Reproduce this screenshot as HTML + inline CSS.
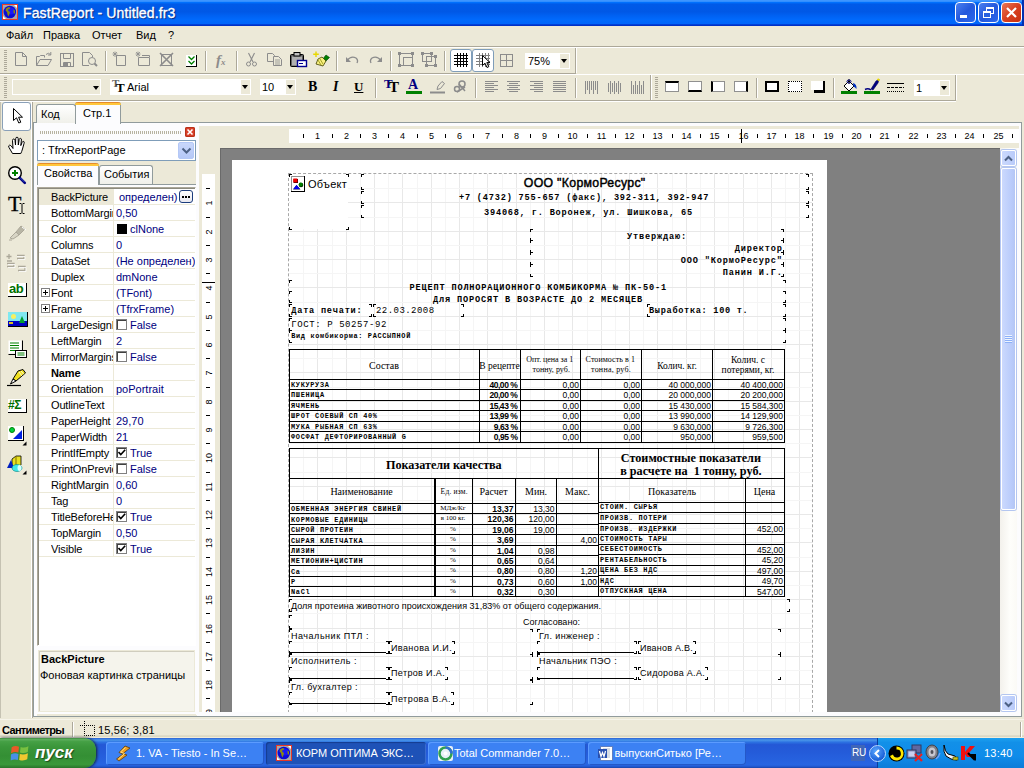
<!DOCTYPE html>
<html><head><meta charset="utf-8">
<title>FastReport - Untitled.fr3</title>
<style>
*{box-sizing:border-box;margin:0;padding:0}
html,body{width:1024px;height:768px;overflow:hidden;background:#ECE9D8;font-family:"Liberation Sans",sans-serif;font-size:11px;color:#000}
.a,.a *{position:absolute}
span{white-space:nowrap}
#title{left:0;top:0;width:1024px;height:26px;background:linear-gradient(180deg,#3D95FF 0%,#3D95FF 5%,#0072FF 9%,#005AE8 16%,#0058E6 45%,#0061F2 60%,#0069FC 75%,#0066FA 91%,#0038D0 95%,#002CC0 100%)}
#title .t{left:23px;top:5px;color:#fff;font-size:14px;letter-spacing:0.12px;-webkit-text-stroke:0.35px #fff;line-height:17px;text-shadow:1px 1px 1px #0A1F6E}
.wb{top:2px;width:21px;height:21px;border:1px solid #fff;border-radius:4px;background:linear-gradient(135deg,#4C80F0,#2458DC 50%,#2C68EC)}
#menu{left:0;top:26px;width:1024px;height:20px}
#menu span{top:3px;font-size:11px}
#task{left:0;top:738px;width:1024px;height:30px;background:linear-gradient(180deg,#2A5CD0 0%,#3D86E6 4%,#4590E8 8%,#2C72E2 14%,#2458D6 22%,#245CDA 50%,#2865E2 90%,#2258D0 95%,#1A44A8 100%)}
#start{left:0;top:738px;width:96px;height:30px;background:linear-gradient(180deg,#3E8A3E 0%,#5CAE5C 5%,#45A045 12%,#3A963A 30%,#348F34 60%,#3A983A 88%,#2A742A 100%);border-radius:0 12px 12px 0;box-shadow:1px 0 3px #123}
#start span{left:35px;top:5px;color:#fff;font-size:17px;font-weight:bold;font-style:italic;text-shadow:1px 1px 1px #1C4A1C}
.tb{top:742px;height:23px;border-radius:3px;background:#3C81F3;color:#fff;font-size:11px;box-shadow:inset 1px 1px 0 #5C9BFF, inset -1px -1px 0 #2458C8}

#tray{left:877px;top:738px;width:147px;height:30px;background:linear-gradient(180deg,#1CA0F0 0%,#1290E8 15%,#0F8CEA 60%,#0C7CD8 100%);border-left:1px solid #0A3C9C}
.pn{left:51px;color:#000}
.pv{left:116px;color:#000080}
.m{font-family:"Liberation Mono",monospace}
.s{font-family:"Liberation Serif",serif}
</style></head><body>
<div id="title" class="a"><span class="t">FastReport - Untitled.fr3</span><svg style="left:2px;top:4px" width="16" height="16" viewBox="0 0 16 16"><rect x="0.500" y="0.500" width="15" height="15" fill="#A8A8A8" stroke="#E83828"/><path d="M12 1L15 1L15 4Z M1 12L1 15L4 15Z" fill="#fff"/><circle cx="7.800" cy="8" r="6.300" fill="#0A0AD8"/><circle cx="9" cy="7" r="3.500" fill="#1818F8"/><path d="M4 4.500L6.500 3L8.500 3.500L7.500 5L6 5.500L6.500 7L8 8L7.500 10L6.500 12.500L5.500 10.500L5 8L3.500 6.500Z" fill="#8A8A10"/><path d="M11.500 5.500L13 6.500L13 9L12 10L11.500 8Z" fill="#8A8A10"/></svg><div class="wb" style="left:955px"><div style="left:4px;top:12px;width:7px;height:3px;background:#fff"></div></div><div class="wb" style="left:978px"><div style="left:7px;top:4px;width:8px;height:7px;border:1px solid #fff;border-top-width:2px"></div><div style="left:4px;top:8px;width:8px;height:7px;border:1px solid #fff;border-top-width:2px;background:#2860E0"></div></div><div class="wb" style="left:1001px;background:linear-gradient(135deg,#E87858,#D84020 50%,#C83010)"><svg style="left:3px;top:3px" width="13" height="13"><path d="M2 2L11 11M11 2L2 11" stroke="#fff" stroke-width="2.2"/></svg></div><div style="left:1022px;top:0;width:2px;height:26px;background:#0030B0"></div></div>
<div id="menu" class="a"><span style="left:6px">Файл</span><span style="left:43px">Правка</span><span style="left:92px">Отчет</span><span style="left:136px">Вид</span><span style="left:168px">?</span></div>
<div class="a" style="left:0px;top:46px;width:1024px;height:1px;background:#ACA899"></div>
<div class="a" style="left:0px;top:47px;width:1024px;height:1px;background:#fff"></div>
<div class="a" style="left:0px;top:73px;width:1024px;height:1px;background:#ACA899"></div>
<div class="a" style="left:0px;top:74px;width:1024px;height:1px;background:#fff"></div>
<div class="a" style="left:0px;top:100px;width:1024px;height:1px;background:#ACA899"></div>
<div class="a" style="left:0px;top:101px;width:1024px;height:1px;background:#fff"></div>
<div class="a" style="left:33px;top:122px;width:989px;height:595px;background:#FCFCFE;border:1px solid #919B9C"></div>
<div class="a" style="left:36px;top:104px;width:40px;height:19px;background:linear-gradient(#fff,#F0F0EA);border:1px solid #919B9C;border-bottom:none;border-radius:3px 3px 0 0"><span style="left:4px;top:3px">Код</span></div>
<div class="a" style="left:75px;top:102px;width:46px;height:22px;background:#FCFCFE;border:1px solid #919B9C;border-bottom:none;border-top:none;border-radius:3px 3px 0 0"><div style="left:-1px;top:0;width:46px;height:3px;border-radius:3px 3px 0 0;background:linear-gradient(#E68B2C 0,#E68B2C 34%,#FFC73C 34%)"></div><span style="left:7px;top:5px">Стр.1</span></div>
<div class="a" style="left:199px;top:126px;width:821px;height:589px;background:#ECE9D8"></div>
<div class="a" style="left:220px;top:148px;width:780px;height:564px;background:#808080"></div>
<div class="a" style="left:232px;top:160px;width:595px;height:552px;background:#fff"></div>
<div class="a" style="left:288px;top:173px;width:525px;height:540px;border:1px dashed #A8A8A8;border-bottom:none"></div>
<div class="a" style="left:0;top:0"><div style="left:303px;top:174px;width:1px;height:538px;background:#F5F5F5"></div><div style="left:317px;top:174px;width:1px;height:538px;background:#E8E8E8"></div><div style="left:332px;top:174px;width:1px;height:538px;background:#F5F5F5"></div><div style="left:346px;top:174px;width:1px;height:538px;background:#E8E8E8"></div><div style="left:360px;top:174px;width:1px;height:538px;background:#F5F5F5"></div><div style="left:374px;top:174px;width:1px;height:538px;background:#E8E8E8"></div><div style="left:388px;top:174px;width:1px;height:538px;background:#F5F5F5"></div><div style="left:402px;top:174px;width:1px;height:538px;background:#E8E8E8"></div><div style="left:417px;top:174px;width:1px;height:538px;background:#F5F5F5"></div><div style="left:431px;top:174px;width:1px;height:538px;background:#E8E8E8"></div><div style="left:445px;top:174px;width:1px;height:538px;background:#F5F5F5"></div><div style="left:459px;top:174px;width:1px;height:538px;background:#E8E8E8"></div><div style="left:473px;top:174px;width:1px;height:538px;background:#F5F5F5"></div><div style="left:487px;top:174px;width:1px;height:538px;background:#E8E8E8"></div><div style="left:502px;top:174px;width:1px;height:538px;background:#F5F5F5"></div><div style="left:516px;top:174px;width:1px;height:538px;background:#E8E8E8"></div><div style="left:530px;top:174px;width:1px;height:538px;background:#F5F5F5"></div><div style="left:544px;top:174px;width:1px;height:538px;background:#E8E8E8"></div><div style="left:558px;top:174px;width:1px;height:538px;background:#F5F5F5"></div><div style="left:572px;top:174px;width:1px;height:538px;background:#E8E8E8"></div><div style="left:587px;top:174px;width:1px;height:538px;background:#F5F5F5"></div><div style="left:601px;top:174px;width:1px;height:538px;background:#E8E8E8"></div><div style="left:615px;top:174px;width:1px;height:538px;background:#F5F5F5"></div><div style="left:629px;top:174px;width:1px;height:538px;background:#E8E8E8"></div><div style="left:643px;top:174px;width:1px;height:538px;background:#F5F5F5"></div><div style="left:657px;top:174px;width:1px;height:538px;background:#E8E8E8"></div><div style="left:672px;top:174px;width:1px;height:538px;background:#F5F5F5"></div><div style="left:686px;top:174px;width:1px;height:538px;background:#E8E8E8"></div><div style="left:700px;top:174px;width:1px;height:538px;background:#F5F5F5"></div><div style="left:714px;top:174px;width:1px;height:538px;background:#E8E8E8"></div><div style="left:728px;top:174px;width:1px;height:538px;background:#F5F5F5"></div><div style="left:743px;top:174px;width:1px;height:538px;background:#E8E8E8"></div><div style="left:757px;top:174px;width:1px;height:538px;background:#F5F5F5"></div><div style="left:771px;top:174px;width:1px;height:538px;background:#E8E8E8"></div><div style="left:785px;top:174px;width:1px;height:538px;background:#F5F5F5"></div><div style="left:799px;top:174px;width:1px;height:538px;background:#E8E8E8"></div><div style="left:289px;top:188px;width:523px;height:1px;background:#F5F5F5"></div><div style="left:289px;top:202px;width:523px;height:1px;background:#E8E8E8"></div><div style="left:289px;top:217px;width:523px;height:1px;background:#F5F5F5"></div><div style="left:289px;top:231px;width:523px;height:1px;background:#E8E8E8"></div><div style="left:289px;top:245px;width:523px;height:1px;background:#F5F5F5"></div><div style="left:289px;top:259px;width:523px;height:1px;background:#E8E8E8"></div><div style="left:289px;top:273px;width:523px;height:1px;background:#F5F5F5"></div><div style="left:289px;top:287px;width:523px;height:1px;background:#E8E8E8"></div><div style="left:289px;top:302px;width:523px;height:1px;background:#F5F5F5"></div><div style="left:289px;top:316px;width:523px;height:1px;background:#E8E8E8"></div><div style="left:289px;top:330px;width:523px;height:1px;background:#F5F5F5"></div><div style="left:289px;top:344px;width:523px;height:1px;background:#E8E8E8"></div><div style="left:289px;top:358px;width:523px;height:1px;background:#F5F5F5"></div><div style="left:289px;top:372px;width:523px;height:1px;background:#E8E8E8"></div><div style="left:289px;top:387px;width:523px;height:1px;background:#F5F5F5"></div><div style="left:289px;top:401px;width:523px;height:1px;background:#E8E8E8"></div><div style="left:289px;top:415px;width:523px;height:1px;background:#F5F5F5"></div><div style="left:289px;top:429px;width:523px;height:1px;background:#E8E8E8"></div><div style="left:289px;top:443px;width:523px;height:1px;background:#F5F5F5"></div><div style="left:289px;top:457px;width:523px;height:1px;background:#E8E8E8"></div><div style="left:289px;top:472px;width:523px;height:1px;background:#F5F5F5"></div><div style="left:289px;top:486px;width:523px;height:1px;background:#E8E8E8"></div><div style="left:289px;top:500px;width:523px;height:1px;background:#F5F5F5"></div><div style="left:289px;top:514px;width:523px;height:1px;background:#E8E8E8"></div><div style="left:289px;top:528px;width:523px;height:1px;background:#F5F5F5"></div><div style="left:289px;top:542px;width:523px;height:1px;background:#E8E8E8"></div><div style="left:289px;top:557px;width:523px;height:1px;background:#F5F5F5"></div><div style="left:289px;top:571px;width:523px;height:1px;background:#E8E8E8"></div><div style="left:289px;top:585px;width:523px;height:1px;background:#F5F5F5"></div><div style="left:289px;top:599px;width:523px;height:1px;background:#E8E8E8"></div><div style="left:289px;top:613px;width:523px;height:1px;background:#F5F5F5"></div><div style="left:289px;top:628px;width:523px;height:1px;background:#E8E8E8"></div><div style="left:289px;top:642px;width:523px;height:1px;background:#F5F5F5"></div><div style="left:289px;top:656px;width:523px;height:1px;background:#E8E8E8"></div><div style="left:289px;top:670px;width:523px;height:1px;background:#F5F5F5"></div><div style="left:289px;top:684px;width:523px;height:1px;background:#E8E8E8"></div><div style="left:289px;top:698px;width:523px;height:1px;background:#F5F5F5"></div></div>
<div class="a" style="left:290px;top:175px;width:58px;height:54px;background:#fff"></div>
<div class="a" style="left:289px;top:174px;width:3px;height:1px;background:#000"></div>
<div class="a" style="left:289px;top:174px;width:1px;height:3px;background:#000"></div>
<div class="a" style="left:346px;top:174px;width:3px;height:1px;background:#000"></div>
<div class="a" style="left:348px;top:174px;width:1px;height:3px;background:#000"></div>
<div class="a" style="left:289px;top:229px;width:3px;height:1px;background:#000"></div>
<div class="a" style="left:289px;top:227px;width:1px;height:3px;background:#000"></div>
<div class="a" style="left:346px;top:229px;width:3px;height:1px;background:#000"></div>
<div class="a" style="left:348px;top:227px;width:1px;height:3px;background:#000"></div>
<svg class="a" style="left:291px;top:176px" width="14" height="16" viewBox="0 0 14 16"><rect x="0" y="0" width="14" height="16" fill="#000"/><rect x="0" y="0" width="13" height="15" fill="#909090"/><rect x="1" y="1" width="12" height="14" fill="#fff"/><rect x="2.500" y="3" width="4.500" height="4" fill="#400000"/><rect x="2.300" y="2.500" width="4" height="3.800" fill="#F00000"/><circle cx="10" cy="9" r="2.300" fill="#002800"/><circle cx="9.700" cy="8.600" r="2" fill="#008000"/><path d="M2 13.500L5.500 9L9.500 13.500Z" fill="#000040"/><path d="M2.300 13L5.500 9L8.800 13Z" fill="#0000F0"/></svg>
<span class="a " style="left:308.0px;top:178.1px;font-size:11px;line-height:13px;letter-spacing:0.26px;">Объект</span>
<div class="a" style="left:361px;top:174px;width:3px;height:1px;background:#000"></div>
<div class="a" style="left:361px;top:174px;width:1px;height:3px;background:#000"></div>
<div class="a" style="left:806px;top:174px;width:3px;height:1px;background:#000"></div>
<div class="a" style="left:808px;top:174px;width:1px;height:3px;background:#000"></div>
<div class="a" style="left:361px;top:189px;width:3px;height:1px;background:#000"></div>
<div class="a" style="left:361px;top:187px;width:1px;height:3px;background:#000"></div>
<div class="a" style="left:806px;top:189px;width:3px;height:1px;background:#000"></div>
<div class="a" style="left:808px;top:187px;width:1px;height:3px;background:#000"></div>
<div class="a" style="left:361px;top:191px;width:3px;height:1px;background:#000"></div>
<div class="a" style="left:361px;top:191px;width:1px;height:3px;background:#000"></div>
<div class="a" style="left:806px;top:191px;width:3px;height:1px;background:#000"></div>
<div class="a" style="left:808px;top:191px;width:1px;height:3px;background:#000"></div>
<div class="a" style="left:361px;top:203px;width:3px;height:1px;background:#000"></div>
<div class="a" style="left:361px;top:201px;width:1px;height:3px;background:#000"></div>
<div class="a" style="left:806px;top:203px;width:3px;height:1px;background:#000"></div>
<div class="a" style="left:808px;top:201px;width:1px;height:3px;background:#000"></div>
<div class="a" style="left:361px;top:205px;width:3px;height:1px;background:#000"></div>
<div class="a" style="left:361px;top:205px;width:1px;height:3px;background:#000"></div>
<div class="a" style="left:806px;top:205px;width:3px;height:1px;background:#000"></div>
<div class="a" style="left:808px;top:205px;width:1px;height:3px;background:#000"></div>
<div class="a" style="left:361px;top:217px;width:3px;height:1px;background:#000"></div>
<div class="a" style="left:361px;top:215px;width:1px;height:3px;background:#000"></div>
<div class="a" style="left:806px;top:217px;width:3px;height:1px;background:#000"></div>
<div class="a" style="left:808px;top:215px;width:1px;height:3px;background:#000"></div>
<span class="a " style="left:523.8px;top:175.5px;font-size:12.3px;line-height:15px;letter-spacing:0.30px;-webkit-text-stroke:0.45px #000;">ООО &quot;КормоРесурс&quot;</span>
<span class="a m" style="left:459.0px;top:193.3px;font-size:8.6px;line-height:10px;font-weight:bold;letter-spacing:0.80px;">+7 (4732) 755-657 (факс), 392-311, 392-947</span>
<span class="a m" style="left:484.0px;top:207.8px;font-size:8.6px;line-height:10px;font-weight:bold;letter-spacing:0.81px;">394068, г. Воронеж, ул. Шишкова, 65</span>
<div class="a" style="left:530px;top:229px;width:3px;height:1px;background:#000"></div>
<div class="a" style="left:530px;top:229px;width:1px;height:3px;background:#000"></div>
<div class="a" style="left:781px;top:229px;width:3px;height:1px;background:#000"></div>
<div class="a" style="left:783px;top:229px;width:1px;height:3px;background:#000"></div>
<div class="a" style="left:530px;top:240px;width:3px;height:1px;background:#000"></div>
<div class="a" style="left:530px;top:238px;width:1px;height:3px;background:#000"></div>
<div class="a" style="left:781px;top:240px;width:3px;height:1px;background:#000"></div>
<div class="a" style="left:783px;top:238px;width:1px;height:3px;background:#000"></div>
<div class="a" style="left:530px;top:240px;width:3px;height:1px;background:#000"></div>
<div class="a" style="left:530px;top:240px;width:1px;height:3px;background:#000"></div>
<div class="a" style="left:781px;top:240px;width:3px;height:1px;background:#000"></div>
<div class="a" style="left:783px;top:240px;width:1px;height:3px;background:#000"></div>
<div class="a" style="left:530px;top:252px;width:3px;height:1px;background:#000"></div>
<div class="a" style="left:530px;top:250px;width:1px;height:3px;background:#000"></div>
<div class="a" style="left:781px;top:252px;width:3px;height:1px;background:#000"></div>
<div class="a" style="left:783px;top:250px;width:1px;height:3px;background:#000"></div>
<div class="a" style="left:530px;top:252px;width:3px;height:1px;background:#000"></div>
<div class="a" style="left:530px;top:252px;width:1px;height:3px;background:#000"></div>
<div class="a" style="left:781px;top:252px;width:3px;height:1px;background:#000"></div>
<div class="a" style="left:783px;top:252px;width:1px;height:3px;background:#000"></div>
<div class="a" style="left:530px;top:264px;width:3px;height:1px;background:#000"></div>
<div class="a" style="left:530px;top:262px;width:1px;height:3px;background:#000"></div>
<div class="a" style="left:781px;top:264px;width:3px;height:1px;background:#000"></div>
<div class="a" style="left:783px;top:262px;width:1px;height:3px;background:#000"></div>
<div class="a" style="left:530px;top:264px;width:3px;height:1px;background:#000"></div>
<div class="a" style="left:530px;top:264px;width:1px;height:3px;background:#000"></div>
<div class="a" style="left:781px;top:264px;width:3px;height:1px;background:#000"></div>
<div class="a" style="left:783px;top:264px;width:1px;height:3px;background:#000"></div>
<div class="a" style="left:530px;top:276px;width:3px;height:1px;background:#000"></div>
<div class="a" style="left:530px;top:274px;width:1px;height:3px;background:#000"></div>
<div class="a" style="left:781px;top:276px;width:3px;height:1px;background:#000"></div>
<div class="a" style="left:783px;top:274px;width:1px;height:3px;background:#000"></div>
<span class="a m" style="left:627.0px;top:232.3px;font-size:8.6px;line-height:10px;font-weight:bold;letter-spacing:0.84px;">Утверждаю:</span>
<span class="a m" style="left:734.8px;top:244.3px;font-size:8.6px;line-height:10px;font-weight:bold;letter-spacing:0.84px;">Директор</span>
<span class="a m" style="left:680.8px;top:256.3px;font-size:8.6px;line-height:10px;font-weight:bold;letter-spacing:0.84px;">ООО &quot;КормоРесурс&quot;</span>
<span class="a m" style="left:722.8px;top:268.3px;font-size:8.6px;line-height:10px;font-weight:bold;letter-spacing:0.84px;">Панин И.Г.</span>
<div class="a" style="left:289px;top:280px;width:3px;height:1px;background:#000"></div>
<div class="a" style="left:289px;top:280px;width:1px;height:3px;background:#000"></div>
<div class="a" style="left:783px;top:280px;width:3px;height:1px;background:#000"></div>
<div class="a" style="left:785px;top:280px;width:1px;height:3px;background:#000"></div>
<div class="a" style="left:289px;top:291px;width:3px;height:1px;background:#000"></div>
<div class="a" style="left:289px;top:291px;width:1px;height:3px;background:#000"></div>
<div class="a" style="left:783px;top:291px;width:3px;height:1px;background:#000"></div>
<div class="a" style="left:785px;top:291px;width:1px;height:3px;background:#000"></div>
<div class="a" style="left:289px;top:302px;width:3px;height:1px;background:#000"></div>
<div class="a" style="left:289px;top:300px;width:1px;height:3px;background:#000"></div>
<div class="a" style="left:783px;top:302px;width:3px;height:1px;background:#000"></div>
<div class="a" style="left:785px;top:300px;width:1px;height:3px;background:#000"></div>
<span class="a m" style="left:409.5px;top:282.8px;font-size:8.6px;line-height:10px;font-weight:bold;letter-spacing:0.83px;">РЕЦЕПТ ПОЛНОРАЦИОННОГО КОМБИКОРМА № ПК-50-1</span>
<span class="a m" style="left:433.0px;top:294.8px;font-size:8.6px;line-height:10px;font-weight:bold;letter-spacing:0.84px;">Для ПОРОСЯТ В ВОЗРАСТЕ ДО 2 МЕСЯЦЕВ</span>
<div class="a" style="left:289px;top:304px;width:3px;height:1px;background:#000"></div>
<div class="a" style="left:289px;top:304px;width:1px;height:3px;background:#000"></div>
<div class="a" style="left:369px;top:304px;width:3px;height:1px;background:#000"></div>
<div class="a" style="left:371px;top:304px;width:1px;height:3px;background:#000"></div>
<div class="a" style="left:289px;top:316px;width:3px;height:1px;background:#000"></div>
<div class="a" style="left:289px;top:314px;width:1px;height:3px;background:#000"></div>
<div class="a" style="left:369px;top:316px;width:3px;height:1px;background:#000"></div>
<div class="a" style="left:371px;top:314px;width:1px;height:3px;background:#000"></div>
<div class="a" style="left:373px;top:304px;width:3px;height:1px;background:#000"></div>
<div class="a" style="left:373px;top:304px;width:1px;height:3px;background:#000"></div>
<div class="a" style="left:461px;top:304px;width:3px;height:1px;background:#000"></div>
<div class="a" style="left:463px;top:304px;width:1px;height:3px;background:#000"></div>
<div class="a" style="left:373px;top:316px;width:3px;height:1px;background:#000"></div>
<div class="a" style="left:373px;top:314px;width:1px;height:3px;background:#000"></div>
<div class="a" style="left:461px;top:316px;width:3px;height:1px;background:#000"></div>
<div class="a" style="left:463px;top:314px;width:1px;height:3px;background:#000"></div>
<span class="a m" style="left:291.3px;top:305.8px;font-size:8.6px;line-height:10px;font-weight:bold;letter-spacing:0.77px;">Дата печати:</span>
<span class="a m" style="left:376.0px;top:305.5px;font-size:9px;line-height:11px;letter-spacing:0.45px;">22.03.2008</span>
<div class="a" style="left:647px;top:304px;width:3px;height:1px;background:#000"></div>
<div class="a" style="left:647px;top:304px;width:1px;height:3px;background:#000"></div>
<div class="a" style="left:647px;top:316px;width:3px;height:1px;background:#000"></div>
<div class="a" style="left:647px;top:314px;width:1px;height:3px;background:#000"></div>
<div class="a" style="left:783px;top:304px;width:3px;height:1px;background:#000"></div>
<div class="a" style="left:785px;top:304px;width:1px;height:3px;background:#000"></div>
<div class="a" style="left:783px;top:316px;width:3px;height:1px;background:#000"></div>
<div class="a" style="left:785px;top:314px;width:1px;height:3px;background:#000"></div>
<span class="a m" style="left:649.0px;top:306.3px;font-size:8.6px;line-height:10px;font-weight:bold;letter-spacing:0.69px;">Выработка: 100 т.</span>
<div class="a" style="left:289px;top:318px;width:3px;height:1px;background:#000"></div>
<div class="a" style="left:289px;top:318px;width:1px;height:3px;background:#000"></div>
<div class="a" style="left:783px;top:318px;width:3px;height:1px;background:#000"></div>
<div class="a" style="left:785px;top:318px;width:1px;height:3px;background:#000"></div>
<div class="a" style="left:289px;top:330px;width:3px;height:1px;background:#000"></div>
<div class="a" style="left:289px;top:328px;width:1px;height:3px;background:#000"></div>
<div class="a" style="left:783px;top:330px;width:3px;height:1px;background:#000"></div>
<div class="a" style="left:785px;top:328px;width:1px;height:3px;background:#000"></div>
<div class="a" style="left:289px;top:330px;width:3px;height:1px;background:#000"></div>
<div class="a" style="left:289px;top:330px;width:1px;height:3px;background:#000"></div>
<div class="a" style="left:783px;top:330px;width:3px;height:1px;background:#000"></div>
<div class="a" style="left:785px;top:330px;width:1px;height:3px;background:#000"></div>
<div class="a" style="left:289px;top:342px;width:3px;height:1px;background:#000"></div>
<div class="a" style="left:289px;top:340px;width:1px;height:3px;background:#000"></div>
<div class="a" style="left:783px;top:342px;width:3px;height:1px;background:#000"></div>
<div class="a" style="left:785px;top:340px;width:1px;height:3px;background:#000"></div>
<span class="a m" style="left:291.3px;top:319.5px;font-size:9px;line-height:11px;letter-spacing:0.58px;">ГОСТ: Р 50257-92</span>
<span class="a m" style="left:291.3px;top:332.3px;font-size:6.9px;line-height:8px;font-weight:bold;letter-spacing:0.65px;">Вид комбикорма: РАССЫПНОЙ</span>
<div class="a" style="left:289px;top:349px;width:496px;height:1px;background:#000"></div>
<div class="a" style="left:289px;top:379px;width:496px;height:1px;background:#000"></div>
<div class="a" style="left:289px;top:389px;width:496px;height:1px;background:#000"></div>
<div class="a" style="left:289px;top:400px;width:496px;height:1px;background:#000"></div>
<div class="a" style="left:289px;top:410px;width:496px;height:1px;background:#000"></div>
<div class="a" style="left:289px;top:421px;width:496px;height:1px;background:#000"></div>
<div class="a" style="left:289px;top:431px;width:496px;height:1px;background:#000"></div>
<div class="a" style="left:289px;top:442px;width:496px;height:1px;background:#000"></div>
<div class="a" style="left:289px;top:349px;width:1px;height:94px;background:#000"></div>
<div class="a" style="left:479px;top:349px;width:1px;height:94px;background:#000"></div>
<div class="a" style="left:520px;top:349px;width:1px;height:94px;background:#000"></div>
<div class="a" style="left:580px;top:349px;width:1px;height:94px;background:#000"></div>
<div class="a" style="left:641px;top:349px;width:1px;height:94px;background:#000"></div>
<div class="a" style="left:712px;top:349px;width:1px;height:94px;background:#000"></div>
<div class="a" style="left:784px;top:349px;width:1px;height:94px;background:#000"></div>
<span class="a s" style="left:369.0px;top:359.6px;font-size:10px;line-height:12px;">Состав</span>
<span class="a s" style="left:479.3px;top:360.9px;font-size:9.5px;line-height:11px;">В рецепте</span>
<span class="a s" style="left:526.3px;top:355.4px;font-size:8px;line-height:10px;letter-spacing:-0.03px;">Опт. цена за 1</span>
<span class="a s" style="left:532.5px;top:365.4px;font-size:8px;line-height:10px;letter-spacing:0.04px;">тонну, руб.</span>
<span class="a s" style="left:585.6px;top:355.4px;font-size:8px;line-height:10px;letter-spacing:0.06px;">Стоимость в 1</span>
<span class="a s" style="left:591.0px;top:365.4px;font-size:8px;line-height:10px;letter-spacing:0.24px;">тонна, руб.</span>
<span class="a s" style="left:657.2px;top:360.9px;font-size:9.5px;line-height:11px;">Колич. кг.</span>
<span class="a s" style="left:731.0px;top:354.9px;font-size:9.5px;line-height:11px;">Колич. с</span>
<span class="a s" style="left:721.6px;top:365.4px;font-size:9.5px;line-height:11px;">потерями, кг.</span>
<span class="a m" style="left:291.0px;top:380.8px;font-size:6.9px;line-height:8px;font-weight:bold;letter-spacing:0.68px;">КУКУРУЗА</span>
<span class="a " style="left:489.4px;top:379.9px;font-size:8.5px;line-height:10px;font-weight:bold;letter-spacing:-0.45px;">40,00 %</span>
<span class="a " style="left:562.5px;top:379.9px;font-size:8.5px;line-height:10px;">0,00</span>
<span class="a " style="left:623.5px;top:379.9px;font-size:8.5px;line-height:10px;">0,00</span>
<span class="a " style="left:668.5px;top:379.9px;font-size:8.5px;line-height:10px;">40 000,000</span>
<span class="a " style="left:740.5px;top:379.9px;font-size:8.5px;line-height:10px;">40 400,000</span>
<span class="a m" style="left:291.0px;top:391.3px;font-size:6.9px;line-height:8px;font-weight:bold;letter-spacing:0.68px;">ПШЕНИЦА</span>
<span class="a " style="left:489.4px;top:390.4px;font-size:8.5px;line-height:10px;font-weight:bold;letter-spacing:-0.45px;">20,00 %</span>
<span class="a " style="left:562.5px;top:390.4px;font-size:8.5px;line-height:10px;">0,00</span>
<span class="a " style="left:623.5px;top:390.4px;font-size:8.5px;line-height:10px;">0,00</span>
<span class="a " style="left:668.5px;top:390.4px;font-size:8.5px;line-height:10px;">20 000,000</span>
<span class="a " style="left:740.5px;top:390.4px;font-size:8.5px;line-height:10px;">20 200,000</span>
<span class="a m" style="left:291.0px;top:401.8px;font-size:6.9px;line-height:8px;font-weight:bold;letter-spacing:0.68px;">ЯЧМЕНЬ</span>
<span class="a " style="left:489.4px;top:400.9px;font-size:8.5px;line-height:10px;font-weight:bold;letter-spacing:-0.45px;">15,43 %</span>
<span class="a " style="left:562.5px;top:400.9px;font-size:8.5px;line-height:10px;">0,00</span>
<span class="a " style="left:623.5px;top:400.9px;font-size:8.5px;line-height:10px;">0,00</span>
<span class="a " style="left:668.5px;top:400.9px;font-size:8.5px;line-height:10px;">15 430,000</span>
<span class="a " style="left:740.5px;top:400.9px;font-size:8.5px;line-height:10px;">15 584,300</span>
<span class="a m" style="left:291.0px;top:412.3px;font-size:6.9px;line-height:8px;font-weight:bold;letter-spacing:0.68px;">ШРОТ СОЕВЫЙ СП 40%</span>
<span class="a " style="left:489.4px;top:411.4px;font-size:8.5px;line-height:10px;font-weight:bold;letter-spacing:-0.45px;">13,99 %</span>
<span class="a " style="left:562.5px;top:411.4px;font-size:8.5px;line-height:10px;">0,00</span>
<span class="a " style="left:623.5px;top:411.4px;font-size:8.5px;line-height:10px;">0,00</span>
<span class="a " style="left:668.5px;top:411.4px;font-size:8.5px;line-height:10px;">13 990,000</span>
<span class="a " style="left:740.5px;top:411.4px;font-size:8.5px;line-height:10px;">14 129,900</span>
<span class="a m" style="left:291.0px;top:422.8px;font-size:6.9px;line-height:8px;font-weight:bold;letter-spacing:0.68px;">МУКА РЫБНАЯ СП 63%</span>
<span class="a " style="left:493.7px;top:421.9px;font-size:8.5px;line-height:10px;font-weight:bold;letter-spacing:-0.44px;">9,63 %</span>
<span class="a " style="left:562.5px;top:421.9px;font-size:8.5px;line-height:10px;">0,00</span>
<span class="a " style="left:623.5px;top:421.9px;font-size:8.5px;line-height:10px;">0,00</span>
<span class="a " style="left:673.2px;top:421.9px;font-size:8.5px;line-height:10px;">9 630,000</span>
<span class="a " style="left:745.2px;top:421.9px;font-size:8.5px;line-height:10px;">9 726,300</span>
<span class="a m" style="left:291.0px;top:433.3px;font-size:6.9px;line-height:8px;font-weight:bold;letter-spacing:0.68px;">ФОСФАТ ДЕФТОРИРОВАННЫЙ G</span>
<span class="a " style="left:493.7px;top:432.4px;font-size:8.5px;line-height:10px;font-weight:bold;letter-spacing:-0.44px;">0,95 %</span>
<span class="a " style="left:562.5px;top:432.4px;font-size:8.5px;line-height:10px;">0,00</span>
<span class="a " style="left:623.5px;top:432.4px;font-size:8.5px;line-height:10px;">0,00</span>
<span class="a " style="left:680.3px;top:432.4px;font-size:8.5px;line-height:10px;">950,000</span>
<span class="a " style="left:752.3px;top:432.4px;font-size:8.5px;line-height:10px;">959,500</span>
<div class="a" style="left:289px;top:448px;width:496px;height:1px;background:#000"></div>
<div class="a" style="left:289px;top:478px;width:310px;height:1px;background:#000"></div>
<div class="a" style="left:598px;top:478px;width:187px;height:1px;background:#000"></div>
<div class="a" style="left:289px;top:503px;width:310px;height:1px;background:#000"></div>
<div class="a" style="left:289px;top:513px;width:310px;height:1px;background:#000"></div>
<div class="a" style="left:289px;top:524px;width:310px;height:1px;background:#000"></div>
<div class="a" style="left:289px;top:534px;width:310px;height:1px;background:#000"></div>
<div class="a" style="left:289px;top:545px;width:310px;height:1px;background:#000"></div>
<div class="a" style="left:289px;top:555px;width:310px;height:1px;background:#000"></div>
<div class="a" style="left:289px;top:565px;width:310px;height:1px;background:#000"></div>
<div class="a" style="left:289px;top:576px;width:310px;height:1px;background:#000"></div>
<div class="a" style="left:289px;top:586px;width:310px;height:1px;background:#000"></div>
<div class="a" style="left:289px;top:596px;width:310px;height:1px;background:#000"></div>
<div class="a" style="left:598px;top:502px;width:187px;height:1px;background:#000"></div>
<div class="a" style="left:598px;top:512px;width:187px;height:1px;background:#000"></div>
<div class="a" style="left:598px;top:523px;width:187px;height:1px;background:#000"></div>
<div class="a" style="left:598px;top:534px;width:187px;height:1px;background:#000"></div>
<div class="a" style="left:598px;top:544px;width:187px;height:1px;background:#000"></div>
<div class="a" style="left:598px;top:554px;width:187px;height:1px;background:#000"></div>
<div class="a" style="left:598px;top:565px;width:187px;height:1px;background:#000"></div>
<div class="a" style="left:598px;top:575px;width:187px;height:1px;background:#000"></div>
<div class="a" style="left:598px;top:586px;width:187px;height:1px;background:#000"></div>
<div class="a" style="left:598px;top:596px;width:187px;height:1px;background:#000"></div>
<div class="a" style="left:289px;top:448px;width:1px;height:149px;background:#000"></div>
<div class="a" style="left:598px;top:448px;width:1px;height:149px;background:#000"></div>
<div class="a" style="left:784px;top:448px;width:1px;height:149px;background:#000"></div>
<div class="a" style="left:434px;top:478px;width:1px;height:119px;background:#000"></div>
<div class="a" style="left:472px;top:478px;width:1px;height:119px;background:#000"></div>
<div class="a" style="left:515px;top:478px;width:1px;height:119px;background:#000"></div>
<div class="a" style="left:556px;top:478px;width:1px;height:119px;background:#000"></div>
<div class="a" style="left:745px;top:478px;width:1px;height:119px;background:#000"></div>
<div class="a" style="left:435px;top:478px;width:1px;height:119px;background:#000"></div>
<span class="a s" style="left:386.0px;top:457.8px;font-size:12.2px;line-height:15px;font-weight:bold;letter-spacing:-0.04px;">Показатели качества</span>
<span class="a s" style="left:620.8px;top:451.3px;font-size:12.2px;line-height:15px;font-weight:bold;">Стоимостные показатели</span>
<span class="a s" style="left:620.2px;top:464.3px;font-size:12.2px;line-height:15px;font-weight:bold;white-space:pre;">в расчете на  1 тонну, руб.</span>
<span class="a s" style="left:330.4px;top:486.1px;font-size:10px;line-height:12px;">Наименование</span>
<span class="a s" style="left:440.6px;top:487.3px;font-size:7.5px;line-height:9px;letter-spacing:0.20px;">Ед. изм.</span>
<span class="a s" style="left:479.5px;top:486.1px;font-size:10px;line-height:12px;">Расчет</span>
<span class="a s" style="left:525.0px;top:486.1px;font-size:10px;line-height:12px;">Мин.</span>
<span class="a s" style="left:565.1px;top:486.1px;font-size:10px;line-height:12px;">Макс.</span>
<span class="a s" style="left:648.1px;top:486.1px;font-size:10px;line-height:12px;">Показатель</span>
<span class="a s" style="left:753.8px;top:486.1px;font-size:10px;line-height:12px;">Цена</span>
<span class="a m" style="left:291.0px;top:505.1px;font-size:6.9px;line-height:8px;font-weight:bold;letter-spacing:0.68px;">ОБМЕННАЯ ЭНЕРГИЯ СВИНЕЙ</span>
<span class="a s" style="left:440.3px;top:503.8px;font-size:7px;line-height:8px;">МДж/Кг</span>
<span class="a " style="left:492.2px;top:503.9px;font-size:8.5px;line-height:10px;font-weight:bold;">13,37</span>
<span class="a " style="left:533.2px;top:503.9px;font-size:8.5px;line-height:10px;">13,30</span>
<span class="a m" style="left:600.0px;top:503.1px;font-size:6.9px;line-height:8px;font-weight:bold;letter-spacing:0.68px;">СТОИМ. СЫРЬЯ</span>
<span class="a m" style="left:291.0px;top:515.6px;font-size:6.9px;line-height:8px;font-weight:bold;letter-spacing:0.68px;">КОРМОВЫЕ ЕДИНИЦЫ</span>
<span class="a s" style="left:440.7px;top:514.3px;font-size:7px;line-height:8px;">в 100 кг.</span>
<span class="a " style="left:487.5px;top:514.4px;font-size:8.5px;line-height:10px;font-weight:bold;">120,36</span>
<span class="a " style="left:528.5px;top:514.4px;font-size:8.5px;line-height:10px;">120,00</span>
<span class="a m" style="left:600.0px;top:513.6px;font-size:6.9px;line-height:8px;font-weight:bold;letter-spacing:0.68px;">ПРОИЗВ. ПОТЕРИ</span>
<span class="a m" style="left:291.0px;top:526.1px;font-size:6.9px;line-height:8px;font-weight:bold;letter-spacing:0.68px;">СЫРОЙ ПРОТЕИН</span>
<span class="a s" style="left:450.1px;top:524.8px;font-size:7px;line-height:8px;">%</span>
<span class="a " style="left:492.2px;top:524.9px;font-size:8.5px;line-height:10px;font-weight:bold;">19,06</span>
<span class="a " style="left:533.2px;top:524.9px;font-size:8.5px;line-height:10px;">19,00</span>
<span class="a m" style="left:600.0px;top:524.6px;font-size:6.9px;line-height:8px;font-weight:bold;letter-spacing:0.68px;">ПРОИЗВ. ИЗДЕРЖКИ</span>
<span class="a " style="left:757.0px;top:524.4px;font-size:8.5px;line-height:10px;">452,00</span>
<span class="a m" style="left:291.0px;top:536.6px;font-size:6.9px;line-height:8px;font-weight:bold;letter-spacing:0.68px;">СЫРАЯ КЛЕТЧАТКА</span>
<span class="a s" style="left:450.1px;top:535.3px;font-size:7px;line-height:8px;">%</span>
<span class="a " style="left:497.0px;top:535.4px;font-size:8.5px;line-height:10px;font-weight:bold;">3,69</span>
<span class="a " style="left:580.5px;top:535.4px;font-size:8.5px;line-height:10px;">4,00</span>
<span class="a m" style="left:600.0px;top:535.1px;font-size:6.9px;line-height:8px;font-weight:bold;letter-spacing:0.68px;">СТОИМОСТЬ ТАРЫ</span>
<span class="a m" style="left:291.0px;top:547.1px;font-size:6.9px;line-height:8px;font-weight:bold;letter-spacing:0.68px;">ЛИЗИН</span>
<span class="a s" style="left:450.1px;top:545.8px;font-size:7px;line-height:8px;">%</span>
<span class="a " style="left:497.0px;top:545.9px;font-size:8.5px;line-height:10px;font-weight:bold;">1,04</span>
<span class="a " style="left:538.0px;top:545.9px;font-size:8.5px;line-height:10px;">0,98</span>
<span class="a m" style="left:600.0px;top:545.1px;font-size:6.9px;line-height:8px;font-weight:bold;letter-spacing:0.68px;">СЕБЕСТОИМОСТЬ</span>
<span class="a " style="left:757.0px;top:544.9px;font-size:8.5px;line-height:10px;">452,00</span>
<span class="a m" style="left:291.0px;top:557.1px;font-size:6.9px;line-height:8px;font-weight:bold;letter-spacing:0.68px;">МЕТИОНИН+ЦИСТИН</span>
<span class="a s" style="left:450.1px;top:555.8px;font-size:7px;line-height:8px;">%</span>
<span class="a " style="left:497.0px;top:555.9px;font-size:8.5px;line-height:10px;font-weight:bold;">0,65</span>
<span class="a " style="left:538.0px;top:555.9px;font-size:8.5px;line-height:10px;">0,64</span>
<span class="a m" style="left:600.0px;top:555.6px;font-size:6.9px;line-height:8px;font-weight:bold;letter-spacing:0.68px;">РЕНТАБЕЛЬНОСТЬ</span>
<span class="a " style="left:761.7px;top:555.4px;font-size:8.5px;line-height:10px;">45,20</span>
<span class="a m" style="left:291.0px;top:567.6px;font-size:6.9px;line-height:8px;font-weight:bold;letter-spacing:0.68px;">Ca</span>
<span class="a s" style="left:450.1px;top:566.3px;font-size:7px;line-height:8px;">%</span>
<span class="a " style="left:497.0px;top:566.4px;font-size:8.5px;line-height:10px;font-weight:bold;">0,80</span>
<span class="a " style="left:538.0px;top:566.4px;font-size:8.5px;line-height:10px;">0,80</span>
<span class="a " style="left:580.5px;top:566.4px;font-size:8.5px;line-height:10px;">1,20</span>
<span class="a m" style="left:600.0px;top:566.1px;font-size:6.9px;line-height:8px;font-weight:bold;letter-spacing:0.68px;">ЦЕНА БЕЗ НДС</span>
<span class="a " style="left:757.0px;top:565.9px;font-size:8.5px;line-height:10px;">497,00</span>
<span class="a m" style="left:291.0px;top:578.1px;font-size:6.9px;line-height:8px;font-weight:bold;letter-spacing:0.68px;">P</span>
<span class="a s" style="left:450.1px;top:576.8px;font-size:7px;line-height:8px;">%</span>
<span class="a " style="left:497.0px;top:576.9px;font-size:8.5px;line-height:10px;font-weight:bold;">0,73</span>
<span class="a " style="left:538.0px;top:576.9px;font-size:8.5px;line-height:10px;">0,60</span>
<span class="a " style="left:580.5px;top:576.9px;font-size:8.5px;line-height:10px;">1,00</span>
<span class="a m" style="left:600.0px;top:576.6px;font-size:6.9px;line-height:8px;font-weight:bold;letter-spacing:0.68px;">НДС</span>
<span class="a " style="left:761.7px;top:576.4px;font-size:8.5px;line-height:10px;">49,70</span>
<span class="a m" style="left:291.0px;top:588.1px;font-size:6.9px;line-height:8px;font-weight:bold;letter-spacing:0.68px;">NaCl</span>
<span class="a s" style="left:450.1px;top:586.8px;font-size:7px;line-height:8px;">%</span>
<span class="a " style="left:497.0px;top:586.9px;font-size:8.5px;line-height:10px;font-weight:bold;">0,32</span>
<span class="a " style="left:538.0px;top:586.9px;font-size:8.5px;line-height:10px;">0,30</span>
<span class="a m" style="left:600.0px;top:587.1px;font-size:6.9px;line-height:8px;font-weight:bold;letter-spacing:0.68px;">ОТПУСКНАЯ ЦЕНА</span>
<span class="a " style="left:757.0px;top:586.9px;font-size:8.5px;line-height:10px;">547,00</span>
<div class="a" style="left:289px;top:599px;width:3px;height:1px;background:#000"></div>
<div class="a" style="left:289px;top:599px;width:1px;height:3px;background:#000"></div>
<div class="a" style="left:289px;top:611px;width:3px;height:1px;background:#000"></div>
<div class="a" style="left:289px;top:609px;width:1px;height:3px;background:#000"></div>
<div class="a" style="left:787px;top:599px;width:3px;height:1px;background:#000"></div>
<div class="a" style="left:789px;top:599px;width:1px;height:3px;background:#000"></div>
<div class="a" style="left:787px;top:611px;width:3px;height:1px;background:#000"></div>
<div class="a" style="left:789px;top:609px;width:1px;height:3px;background:#000"></div>
<span class="a " style="left:291.0px;top:600.6px;font-size:9px;line-height:11px;letter-spacing:0.03px;">Доля протеина животного происхождения 31,83% от общего содержания.</span>
<span class="a " style="left:523.0px;top:616.6px;font-size:9px;line-height:11px;letter-spacing:0.03px;">Согласовано:</span>
<div class="a" style="left:289px;top:615px;width:3px;height:1px;background:#000"></div>
<div class="a" style="left:289px;top:615px;width:1px;height:3px;background:#000"></div>
<div class="a" style="left:289px;top:628px;width:3px;height:1px;background:#000"></div>
<div class="a" style="left:289px;top:626px;width:1px;height:3px;background:#000"></div>
<div class="a" style="left:289px;top:629px;width:3px;height:1px;background:#000"></div>
<div class="a" style="left:289px;top:629px;width:1px;height:3px;background:#000"></div>
<div class="a" style="left:530px;top:629px;width:3px;height:1px;background:#000"></div>
<div class="a" style="left:532px;top:629px;width:1px;height:3px;background:#000"></div>
<div class="a" style="left:289px;top:654px;width:3px;height:1px;background:#000"></div>
<div class="a" style="left:289px;top:652px;width:1px;height:3px;background:#000"></div>
<div class="a" style="left:530px;top:654px;width:3px;height:1px;background:#000"></div>
<div class="a" style="left:532px;top:652px;width:1px;height:3px;background:#000"></div>
<span class="a " style="left:291.0px;top:630.6px;font-size:9px;line-height:11px;letter-spacing:0.53px;">Начальник ПТЛ :</span>
<div class="a" style="left:289px;top:652px;width:97px;height:1px;background:#000"></div>
<div class="a" style="left:289px;top:641px;width:3px;height:1px;background:#000"></div>
<div class="a" style="left:289px;top:641px;width:1px;height:3px;background:#000"></div>
<div class="a" style="left:289px;top:653px;width:3px;height:1px;background:#000"></div>
<div class="a" style="left:289px;top:651px;width:1px;height:3px;background:#000"></div>
<div class="a" style="left:386px;top:641px;width:3px;height:1px;background:#000"></div>
<div class="a" style="left:388px;top:641px;width:1px;height:3px;background:#000"></div>
<div class="a" style="left:386px;top:653px;width:3px;height:1px;background:#000"></div>
<div class="a" style="left:388px;top:651px;width:1px;height:3px;background:#000"></div>
<div class="a" style="left:389px;top:641px;width:3px;height:1px;background:#000"></div>
<div class="a" style="left:389px;top:641px;width:1px;height:3px;background:#000"></div>
<div class="a" style="left:389px;top:653px;width:3px;height:1px;background:#000"></div>
<div class="a" style="left:389px;top:651px;width:1px;height:3px;background:#000"></div>
<div class="a" style="left:452px;top:641px;width:3px;height:1px;background:#000"></div>
<div class="a" style="left:454px;top:641px;width:1px;height:3px;background:#000"></div>
<div class="a" style="left:452px;top:653px;width:3px;height:1px;background:#000"></div>
<div class="a" style="left:454px;top:651px;width:1px;height:3px;background:#000"></div>
<span class="a " style="left:391.0px;top:642.6px;font-size:9px;line-height:11px;letter-spacing:0.40px;">Иванова И.И.</span>
<div class="a" style="left:289px;top:654px;width:3px;height:1px;background:#000"></div>
<div class="a" style="left:289px;top:654px;width:1px;height:3px;background:#000"></div>
<div class="a" style="left:530px;top:654px;width:3px;height:1px;background:#000"></div>
<div class="a" style="left:532px;top:654px;width:1px;height:3px;background:#000"></div>
<div class="a" style="left:289px;top:679px;width:3px;height:1px;background:#000"></div>
<div class="a" style="left:289px;top:677px;width:1px;height:3px;background:#000"></div>
<div class="a" style="left:530px;top:679px;width:3px;height:1px;background:#000"></div>
<div class="a" style="left:532px;top:677px;width:1px;height:3px;background:#000"></div>
<span class="a " style="left:291.0px;top:656.1px;font-size:9px;line-height:11px;letter-spacing:0.49px;">Исполнитель :</span>
<div class="a" style="left:289px;top:677.5px;width:97px;height:1px;background:#000"></div>
<div class="a" style="left:289px;top:666.5px;width:3px;height:1px;background:#000"></div>
<div class="a" style="left:289px;top:666.5px;width:1px;height:3px;background:#000"></div>
<div class="a" style="left:289px;top:678.5px;width:3px;height:1px;background:#000"></div>
<div class="a" style="left:289px;top:676.5px;width:1px;height:3px;background:#000"></div>
<div class="a" style="left:386px;top:666.5px;width:3px;height:1px;background:#000"></div>
<div class="a" style="left:388px;top:666.5px;width:1px;height:3px;background:#000"></div>
<div class="a" style="left:386px;top:678.5px;width:3px;height:1px;background:#000"></div>
<div class="a" style="left:388px;top:676.5px;width:1px;height:3px;background:#000"></div>
<div class="a" style="left:389px;top:666.5px;width:3px;height:1px;background:#000"></div>
<div class="a" style="left:389px;top:666.5px;width:1px;height:3px;background:#000"></div>
<div class="a" style="left:389px;top:678.5px;width:3px;height:1px;background:#000"></div>
<div class="a" style="left:389px;top:676.5px;width:1px;height:3px;background:#000"></div>
<div class="a" style="left:445px;top:666.5px;width:3px;height:1px;background:#000"></div>
<div class="a" style="left:447px;top:666.5px;width:1px;height:3px;background:#000"></div>
<div class="a" style="left:445px;top:678.5px;width:3px;height:1px;background:#000"></div>
<div class="a" style="left:447px;top:676.5px;width:1px;height:3px;background:#000"></div>
<span class="a " style="left:391.0px;top:668.1px;font-size:9px;line-height:11px;letter-spacing:0.36px;">Петров И.А.</span>
<div class="a" style="left:289px;top:680px;width:3px;height:1px;background:#000"></div>
<div class="a" style="left:289px;top:680px;width:1px;height:3px;background:#000"></div>
<div class="a" style="left:530px;top:680px;width:3px;height:1px;background:#000"></div>
<div class="a" style="left:532px;top:680px;width:1px;height:3px;background:#000"></div>
<div class="a" style="left:289px;top:704px;width:3px;height:1px;background:#000"></div>
<div class="a" style="left:289px;top:702px;width:1px;height:3px;background:#000"></div>
<div class="a" style="left:530px;top:704px;width:3px;height:1px;background:#000"></div>
<div class="a" style="left:532px;top:702px;width:1px;height:3px;background:#000"></div>
<span class="a " style="left:291.0px;top:681.6px;font-size:9px;line-height:11px;letter-spacing:0.40px;">Гл. бухгалтер :</span>
<div class="a" style="left:289px;top:703px;width:97px;height:1px;background:#000"></div>
<div class="a" style="left:289px;top:692px;width:3px;height:1px;background:#000"></div>
<div class="a" style="left:289px;top:692px;width:1px;height:3px;background:#000"></div>
<div class="a" style="left:289px;top:704px;width:3px;height:1px;background:#000"></div>
<div class="a" style="left:289px;top:702px;width:1px;height:3px;background:#000"></div>
<div class="a" style="left:386px;top:692px;width:3px;height:1px;background:#000"></div>
<div class="a" style="left:388px;top:692px;width:1px;height:3px;background:#000"></div>
<div class="a" style="left:386px;top:704px;width:3px;height:1px;background:#000"></div>
<div class="a" style="left:388px;top:702px;width:1px;height:3px;background:#000"></div>
<div class="a" style="left:389px;top:692px;width:3px;height:1px;background:#000"></div>
<div class="a" style="left:389px;top:692px;width:1px;height:3px;background:#000"></div>
<div class="a" style="left:389px;top:704px;width:3px;height:1px;background:#000"></div>
<div class="a" style="left:389px;top:702px;width:1px;height:3px;background:#000"></div>
<div class="a" style="left:451px;top:692px;width:3px;height:1px;background:#000"></div>
<div class="a" style="left:453px;top:692px;width:1px;height:3px;background:#000"></div>
<div class="a" style="left:451px;top:704px;width:3px;height:1px;background:#000"></div>
<div class="a" style="left:453px;top:702px;width:1px;height:3px;background:#000"></div>
<span class="a " style="left:391.0px;top:693.6px;font-size:9px;line-height:11px;letter-spacing:0.46px;">Петрова В.А.</span>
<div class="a" style="left:537px;top:629px;width:3px;height:1px;background:#000"></div>
<div class="a" style="left:537px;top:629px;width:1px;height:3px;background:#000"></div>
<div class="a" style="left:778px;top:629px;width:3px;height:1px;background:#000"></div>
<div class="a" style="left:780px;top:629px;width:1px;height:3px;background:#000"></div>
<div class="a" style="left:537px;top:654px;width:3px;height:1px;background:#000"></div>
<div class="a" style="left:537px;top:652px;width:1px;height:3px;background:#000"></div>
<div class="a" style="left:778px;top:654px;width:3px;height:1px;background:#000"></div>
<div class="a" style="left:780px;top:652px;width:1px;height:3px;background:#000"></div>
<span class="a " style="left:539.0px;top:630.6px;font-size:9px;line-height:11px;letter-spacing:0.41px;">Гл. инженер :</span>
<div class="a" style="left:537px;top:652px;width:97px;height:1px;background:#000"></div>
<div class="a" style="left:537px;top:641px;width:3px;height:1px;background:#000"></div>
<div class="a" style="left:537px;top:641px;width:1px;height:3px;background:#000"></div>
<div class="a" style="left:537px;top:653px;width:3px;height:1px;background:#000"></div>
<div class="a" style="left:537px;top:651px;width:1px;height:3px;background:#000"></div>
<div class="a" style="left:634px;top:641px;width:3px;height:1px;background:#000"></div>
<div class="a" style="left:636px;top:641px;width:1px;height:3px;background:#000"></div>
<div class="a" style="left:634px;top:653px;width:3px;height:1px;background:#000"></div>
<div class="a" style="left:636px;top:651px;width:1px;height:3px;background:#000"></div>
<div class="a" style="left:638px;top:641px;width:3px;height:1px;background:#000"></div>
<div class="a" style="left:638px;top:641px;width:1px;height:3px;background:#000"></div>
<div class="a" style="left:638px;top:653px;width:3px;height:1px;background:#000"></div>
<div class="a" style="left:638px;top:651px;width:1px;height:3px;background:#000"></div>
<div class="a" style="left:693px;top:641px;width:3px;height:1px;background:#000"></div>
<div class="a" style="left:695px;top:641px;width:1px;height:3px;background:#000"></div>
<div class="a" style="left:693px;top:653px;width:3px;height:1px;background:#000"></div>
<div class="a" style="left:695px;top:651px;width:1px;height:3px;background:#000"></div>
<span class="a " style="left:640.0px;top:642.6px;font-size:9px;line-height:11px;letter-spacing:0.23px;">Иванов А.В.</span>
<div class="a" style="left:537px;top:654px;width:3px;height:1px;background:#000"></div>
<div class="a" style="left:537px;top:654px;width:1px;height:3px;background:#000"></div>
<div class="a" style="left:778px;top:654px;width:3px;height:1px;background:#000"></div>
<div class="a" style="left:780px;top:654px;width:1px;height:3px;background:#000"></div>
<div class="a" style="left:537px;top:679px;width:3px;height:1px;background:#000"></div>
<div class="a" style="left:537px;top:677px;width:1px;height:3px;background:#000"></div>
<div class="a" style="left:778px;top:679px;width:3px;height:1px;background:#000"></div>
<div class="a" style="left:780px;top:677px;width:1px;height:3px;background:#000"></div>
<span class="a " style="left:539.0px;top:656.1px;font-size:9px;line-height:11px;letter-spacing:0.38px;">Начальник ПЭО :</span>
<div class="a" style="left:537px;top:677.5px;width:97px;height:1px;background:#000"></div>
<div class="a" style="left:537px;top:666.5px;width:3px;height:1px;background:#000"></div>
<div class="a" style="left:537px;top:666.5px;width:1px;height:3px;background:#000"></div>
<div class="a" style="left:537px;top:678.5px;width:3px;height:1px;background:#000"></div>
<div class="a" style="left:537px;top:676.5px;width:1px;height:3px;background:#000"></div>
<div class="a" style="left:634px;top:666.5px;width:3px;height:1px;background:#000"></div>
<div class="a" style="left:636px;top:666.5px;width:1px;height:3px;background:#000"></div>
<div class="a" style="left:634px;top:678.5px;width:3px;height:1px;background:#000"></div>
<div class="a" style="left:636px;top:676.5px;width:1px;height:3px;background:#000"></div>
<div class="a" style="left:638px;top:666.5px;width:3px;height:1px;background:#000"></div>
<div class="a" style="left:638px;top:666.5px;width:1px;height:3px;background:#000"></div>
<div class="a" style="left:638px;top:678.5px;width:3px;height:1px;background:#000"></div>
<div class="a" style="left:638px;top:676.5px;width:1px;height:3px;background:#000"></div>
<div class="a" style="left:705px;top:666.5px;width:3px;height:1px;background:#000"></div>
<div class="a" style="left:707px;top:666.5px;width:1px;height:3px;background:#000"></div>
<div class="a" style="left:705px;top:678.5px;width:3px;height:1px;background:#000"></div>
<div class="a" style="left:707px;top:676.5px;width:1px;height:3px;background:#000"></div>
<span class="a " style="left:640.0px;top:668.1px;font-size:9px;line-height:11px;letter-spacing:0.31px;">Сидорова А.А.</span>
<div class="a" style="left:1000px;top:148px;width:17px;height:564px;background:linear-gradient(90deg,#F3F1EC,#FEFEFB 60%,#FBFAF6)"></div>
<div class="a" style="left:1019px;top:126px;width:2px;height:589px;background:#FCFCFE"></div>
<div class="a" style="left:1017px;top:148px;width:2px;height:564px;background:#FCFCFE"></div>
<div class="a" style="left:1001px;top:150px;width:15px;height:16px;border:1px solid #fff;border-radius:2px;background:linear-gradient(90deg,#CBD9FD,#B9CBFA);box-shadow:0 0 0 1px #B4C6F0"><svg style="left:2px;top:4px" width="9" height="7"><path d="M1 5.500L4.500 2L8 5.500" stroke="#4D6185" stroke-width="2" fill="none"/></svg></div>
<div class="a" style="left:1001px;top:168px;width:15px;height:342px;border:1px solid #fff;border-radius:2px;background:linear-gradient(90deg,#CBD9FD,#BACCFB 70%,#B4C6F4);box-shadow:0 0 0 1px #B4C6F0"><div style="left:3px;top:166px;width:7px;height:8px;background:repeating-linear-gradient(180deg,#EEF4FE 0,#EEF4FE 1px,#8CB0F8 1px,#8CB0F8 2px)"></div></div>
<div class="a" style="left:1001px;top:695px;width:15px;height:16px;border:1px solid #fff;border-radius:2px;background:linear-gradient(90deg,#CBD9FD,#B9CBFA);box-shadow:0 0 0 1px #B4C6F0"><svg style="left:2px;top:5px" width="9" height="7"><path d="M1 1.500L4.500 5L8 1.500" stroke="#4D6185" stroke-width="2" fill="none"/></svg></div>
<div class="a" style="left:220px;top:148px;width:780px;height:1px;background:#6A6A6A"></div>
<div class="a" style="left:220px;top:148px;width:1px;height:564px;background:#6A6A6A"></div>
<div class="a" style="left:199px;top:712px;width:821px;height:3px;background:#FCFCFE"></div>
<div class="a" style="left:289px;top:129px;width:730px;height:14px;background:#fff"></div>
<div class="a" style="left:303px;top:134px;width:1px;height:4px;background:#000"></div>
<span class="a" style="left:307.5px;top:129.5px;width:20px;text-align:center;font-size:9px;line-height:12px">1</span>
<div class="a" style="left:332px;top:134px;width:1px;height:4px;background:#000"></div>
<span class="a" style="left:336.5px;top:129.5px;width:20px;text-align:center;font-size:9px;line-height:12px">2</span>
<div class="a" style="left:360px;top:134px;width:1px;height:4px;background:#000"></div>
<span class="a" style="left:364.5px;top:129.5px;width:20px;text-align:center;font-size:9px;line-height:12px">3</span>
<div class="a" style="left:388px;top:134px;width:1px;height:4px;background:#000"></div>
<span class="a" style="left:392.5px;top:129.5px;width:20px;text-align:center;font-size:9px;line-height:12px">4</span>
<div class="a" style="left:417px;top:134px;width:1px;height:4px;background:#000"></div>
<span class="a" style="left:421.5px;top:129.5px;width:20px;text-align:center;font-size:9px;line-height:12px">5</span>
<div class="a" style="left:445px;top:134px;width:1px;height:4px;background:#000"></div>
<span class="a" style="left:449.5px;top:129.5px;width:20px;text-align:center;font-size:9px;line-height:12px">6</span>
<div class="a" style="left:473px;top:134px;width:1px;height:4px;background:#000"></div>
<span class="a" style="left:477.5px;top:129.5px;width:20px;text-align:center;font-size:9px;line-height:12px">7</span>
<div class="a" style="left:502px;top:134px;width:1px;height:4px;background:#000"></div>
<span class="a" style="left:506.5px;top:129.5px;width:20px;text-align:center;font-size:9px;line-height:12px">8</span>
<div class="a" style="left:530px;top:134px;width:1px;height:4px;background:#000"></div>
<span class="a" style="left:534.5px;top:129.5px;width:20px;text-align:center;font-size:9px;line-height:12px">9</span>
<div class="a" style="left:558px;top:134px;width:1px;height:4px;background:#000"></div>
<span class="a" style="left:562.5px;top:129.5px;width:20px;text-align:center;font-size:9px;line-height:12px">10</span>
<div class="a" style="left:587px;top:134px;width:1px;height:4px;background:#000"></div>
<span class="a" style="left:591.5px;top:129.5px;width:20px;text-align:center;font-size:9px;line-height:12px">11</span>
<div class="a" style="left:615px;top:134px;width:1px;height:4px;background:#000"></div>
<span class="a" style="left:619.5px;top:129.5px;width:20px;text-align:center;font-size:9px;line-height:12px">12</span>
<div class="a" style="left:643px;top:134px;width:1px;height:4px;background:#000"></div>
<span class="a" style="left:647.5px;top:129.5px;width:20px;text-align:center;font-size:9px;line-height:12px">13</span>
<div class="a" style="left:672px;top:134px;width:1px;height:4px;background:#000"></div>
<span class="a" style="left:676.5px;top:129.5px;width:20px;text-align:center;font-size:9px;line-height:12px">14</span>
<div class="a" style="left:700px;top:134px;width:1px;height:4px;background:#000"></div>
<span class="a" style="left:704.5px;top:129.5px;width:20px;text-align:center;font-size:9px;line-height:12px">15</span>
<div class="a" style="left:728px;top:134px;width:1px;height:4px;background:#000"></div>
<span class="a" style="left:733.5px;top:129.5px;width:20px;text-align:center;font-size:9px;line-height:12px">16</span>
<div class="a" style="left:757px;top:134px;width:1px;height:4px;background:#000"></div>
<span class="a" style="left:761.5px;top:129.5px;width:20px;text-align:center;font-size:9px;line-height:12px">17</span>
<div class="a" style="left:785px;top:134px;width:1px;height:4px;background:#000"></div>
<span class="a" style="left:789.5px;top:129.5px;width:20px;text-align:center;font-size:9px;line-height:12px">18</span>
<div class="a" style="left:813px;top:134px;width:1px;height:4px;background:#000"></div>
<span class="a" style="left:818.5px;top:129.5px;width:20px;text-align:center;font-size:9px;line-height:12px">19</span>
<div class="a" style="left:842px;top:134px;width:1px;height:4px;background:#000"></div>
<span class="a" style="left:846.5px;top:129.5px;width:20px;text-align:center;font-size:9px;line-height:12px">20</span>
<div class="a" style="left:870px;top:134px;width:1px;height:4px;background:#000"></div>
<span class="a" style="left:874.5px;top:129.5px;width:20px;text-align:center;font-size:9px;line-height:12px">21</span>
<div class="a" style="left:898px;top:134px;width:1px;height:4px;background:#000"></div>
<span class="a" style="left:903.5px;top:129.5px;width:20px;text-align:center;font-size:9px;line-height:12px">22</span>
<div class="a" style="left:927px;top:134px;width:1px;height:4px;background:#000"></div>
<span class="a" style="left:931.5px;top:129.5px;width:20px;text-align:center;font-size:9px;line-height:12px">23</span>
<div class="a" style="left:955px;top:134px;width:1px;height:4px;background:#000"></div>
<span class="a" style="left:959.5px;top:129.5px;width:20px;text-align:center;font-size:9px;line-height:12px">24</span>
<div class="a" style="left:983px;top:134px;width:1px;height:4px;background:#000"></div>
<span class="a" style="left:988.5px;top:129.5px;width:20px;text-align:center;font-size:9px;line-height:12px">25</span>
<div class="a" style="left:1012px;top:134px;width:1px;height:4px;background:#000"></div>
<div class="a" style="left:741px;top:129px;width:1px;height:14px;background:#000"></div>
<div class="a" style="left:202px;top:174px;width:13px;height:538px;background:#fff"></div>
<div class="a" style="left:199px;top:174px;width:20px;height:538px;overflow:hidden">
<div class="a" style="left:7px;top:14px;width:4px;height:1px;background:#000"></div>
<span class="a" style="left:-0.5px;top:22.5px;width:20px;height:12px;text-align:center;font-size:9px;line-height:12px;transform:rotate(-90deg)">1</span>
<div class="a" style="left:7px;top:43px;width:4px;height:1px;background:#000"></div>
<span class="a" style="left:-0.5px;top:51.5px;width:20px;height:12px;text-align:center;font-size:9px;line-height:12px;transform:rotate(-90deg)">2</span>
<div class="a" style="left:7px;top:71px;width:4px;height:1px;background:#000"></div>
<span class="a" style="left:-0.5px;top:79.5px;width:20px;height:12px;text-align:center;font-size:9px;line-height:12px;transform:rotate(-90deg)">3</span>
<div class="a" style="left:7px;top:99px;width:4px;height:1px;background:#000"></div>
<span class="a" style="left:-0.5px;top:107.5px;width:20px;height:12px;text-align:center;font-size:9px;line-height:12px;transform:rotate(-90deg)">4</span>
<div class="a" style="left:7px;top:128px;width:4px;height:1px;background:#000"></div>
<span class="a" style="left:-0.5px;top:136.5px;width:20px;height:12px;text-align:center;font-size:9px;line-height:12px;transform:rotate(-90deg)">5</span>
<div class="a" style="left:7px;top:156px;width:4px;height:1px;background:#000"></div>
<span class="a" style="left:-0.5px;top:164.5px;width:20px;height:12px;text-align:center;font-size:9px;line-height:12px;transform:rotate(-90deg)">6</span>
<div class="a" style="left:7px;top:184px;width:4px;height:1px;background:#000"></div>
<span class="a" style="left:-0.5px;top:192.5px;width:20px;height:12px;text-align:center;font-size:9px;line-height:12px;transform:rotate(-90deg)">7</span>
<div class="a" style="left:7px;top:213px;width:4px;height:1px;background:#000"></div>
<span class="a" style="left:-0.5px;top:221.5px;width:20px;height:12px;text-align:center;font-size:9px;line-height:12px;transform:rotate(-90deg)">8</span>
<div class="a" style="left:7px;top:241px;width:4px;height:1px;background:#000"></div>
<span class="a" style="left:-0.5px;top:249.5px;width:20px;height:12px;text-align:center;font-size:9px;line-height:12px;transform:rotate(-90deg)">9</span>
<div class="a" style="left:7px;top:269px;width:4px;height:1px;background:#000"></div>
<span class="a" style="left:-0.5px;top:277.5px;width:20px;height:12px;text-align:center;font-size:9px;line-height:12px;transform:rotate(-90deg)">10</span>
<div class="a" style="left:7px;top:298px;width:4px;height:1px;background:#000"></div>
<span class="a" style="left:-0.5px;top:306.5px;width:20px;height:12px;text-align:center;font-size:9px;line-height:12px;transform:rotate(-90deg)">11</span>
<div class="a" style="left:7px;top:326px;width:4px;height:1px;background:#000"></div>
<span class="a" style="left:-0.5px;top:334.5px;width:20px;height:12px;text-align:center;font-size:9px;line-height:12px;transform:rotate(-90deg)">12</span>
<div class="a" style="left:7px;top:354px;width:4px;height:1px;background:#000"></div>
<span class="a" style="left:-0.5px;top:362.5px;width:20px;height:12px;text-align:center;font-size:9px;line-height:12px;transform:rotate(-90deg)">13</span>
<div class="a" style="left:7px;top:383px;width:4px;height:1px;background:#000"></div>
<span class="a" style="left:-0.5px;top:391.5px;width:20px;height:12px;text-align:center;font-size:9px;line-height:12px;transform:rotate(-90deg)">14</span>
<div class="a" style="left:7px;top:411px;width:4px;height:1px;background:#000"></div>
<span class="a" style="left:-0.5px;top:419.5px;width:20px;height:12px;text-align:center;font-size:9px;line-height:12px;transform:rotate(-90deg)">15</span>
<div class="a" style="left:7px;top:439px;width:4px;height:1px;background:#000"></div>
<span class="a" style="left:-0.5px;top:448.5px;width:20px;height:12px;text-align:center;font-size:9px;line-height:12px;transform:rotate(-90deg)">16</span>
<div class="a" style="left:7px;top:468px;width:4px;height:1px;background:#000"></div>
<span class="a" style="left:-0.5px;top:476.5px;width:20px;height:12px;text-align:center;font-size:9px;line-height:12px;transform:rotate(-90deg)">17</span>
<div class="a" style="left:7px;top:496px;width:4px;height:1px;background:#000"></div>
<span class="a" style="left:-0.5px;top:504.5px;width:20px;height:12px;text-align:center;font-size:9px;line-height:12px;transform:rotate(-90deg)">18</span>
<div class="a" style="left:7px;top:524px;width:4px;height:1px;background:#000"></div>
<span class="a" style="left:-0.5px;top:533.5px;width:20px;height:12px;text-align:center;font-size:9px;line-height:12px;transform:rotate(-90deg)">19</span>
</div>
<div class="a" style="left:202px;top:282px;width:13px;height:1px;background:#000"></div>
<div class="a" style="left:40px;top:131px;width:141px;height:3px;background:repeating-linear-gradient(90deg,#B8B4A2 0,#B8B4A2 1px,transparent 1px,transparent 2px)"></div>
<div class="a" style="left:185px;top:127px;width:10px;height:10px;background:#D8402A;border-radius:2px;box-shadow:inset 0 0 0 1px #B83018"><svg style="left:0;top:0" width="10" height="10"><path d="M2.5 2.5L7.5 7.5M7.5 2.5L2.5 7.5" stroke="#fff" stroke-width="1.6"/></svg></div>
<div class="a" style="left:37px;top:140px;width:159px;height:21px;background:#fff;border:1px solid #7F9DB9"><span style="left:4px;top:3px;font-size:11px">: TfrxReportPage</span><div style="left:140px;top:1px;width:16px;height:17px;background:linear-gradient(#C9D7FB,#B5C8F7);border-radius:2px;border:1px solid #B4C8F6"><svg style="left:2px;top:4px" width="11" height="8"><path d="M1.5 1.5L5.5 5.5L9.5 1.5" stroke="#4D6185" stroke-width="2" fill="none"/></svg></div></div>
<div class="a" style="left:37px;top:161px;width:160px;height:555px;background:#ECE9D8"></div>
<div class="a" style="left:37px;top:184px;width:159px;height:530px;background:#FCFCFE;border-top:1px solid #919B9C"></div>
<div class="a" style="left:37px;top:163px;width:62px;height:22px;background:#FCFCFE;border:1px solid #919B9C;border-bottom:none;border-top:none;border-radius:3px 3px 0 0"><div style="left:-1px;top:0;width:62px;height:3px;border-radius:3px 3px 0 0;background:linear-gradient(#E68B2C 0,#E68B2C 34%,#FFC73C 34%)"></div><span style="left:6px;top:3.5px;font-size:11px;line-height:13px">Свойства</span></div>
<div class="a" style="left:99px;top:165px;width:54px;height:19px;background:linear-gradient(#fff,#F0F0EA);border:1px solid #919B9C;border-bottom:none;border-radius:3px 3px 0 0"><span style="left:4px;top:2px;font-size:11px">События</span></div>
<div class="a" style="left:37px;top:187px;width:159px;height:459px;background:#fff;border:1px solid;border-color:#ACA899 #fff #fff #ACA899;box-shadow:inset 1px 1px 0 #8C8A7E"></div>
<div class="a" style="left:0;top:0"><div style="left:39px;top:204px;width:156px;height:1px;background:#ECE9D8"></div><div style="left:39px;top:189px;width:74px;height:15px;background:#ECE9D8"></div><div style="left:51px;top:189px;width:62px;height:15px;overflow:hidden"><span style="left:0;top:2px;font-size:11px;line-height:13px;letter-spacing:-0.15px;">BackPicture</span></div><span style="left:119px;top:191px;font-size:11px;line-height:13px;color:#000080">определен)</span><div style="left:39px;top:220px;width:156px;height:1px;background:#ECE9D8"></div><div style="left:51px;top:205px;width:62px;height:15px;overflow:hidden"><span style="left:0;top:2px;font-size:11px;line-height:13px;letter-spacing:-0.15px;">BottomMargin</span></div><div style="left:116px;top:205px;width:79px;height:15px;overflow:hidden"><span style="left:0;top:2px;font-size:11px;line-height:13px;color:#000080">0,50</span></div><div style="left:39px;top:236px;width:156px;height:1px;background:#ECE9D8"></div><div style="left:51px;top:221px;width:62px;height:15px;overflow:hidden"><span style="left:0;top:2px;font-size:11px;line-height:13px;letter-spacing:-0.15px;">Color</span></div><div style="left:117px;top:224px;width:10px;height:10px;background:#000"></div><div style="left:130px;top:221px;width:65px;height:15px;overflow:hidden"><span style="left:0;top:2px;font-size:11px;line-height:13px;color:#000080">clNone</span></div><div style="left:39px;top:252px;width:156px;height:1px;background:#ECE9D8"></div><div style="left:51px;top:237px;width:62px;height:15px;overflow:hidden"><span style="left:0;top:2px;font-size:11px;line-height:13px;letter-spacing:-0.15px;">Columns</span></div><div style="left:116px;top:237px;width:79px;height:15px;overflow:hidden"><span style="left:0;top:2px;font-size:11px;line-height:13px;color:#000080">0</span></div><div style="left:39px;top:268px;width:156px;height:1px;background:#ECE9D8"></div><div style="left:51px;top:253px;width:62px;height:15px;overflow:hidden"><span style="left:0;top:2px;font-size:11px;line-height:13px;letter-spacing:-0.15px;">DataSet</span></div><div style="left:116px;top:253px;width:79px;height:15px;overflow:hidden"><span style="left:0;top:2px;font-size:11px;line-height:13px;color:#000080">(Не определен)</span></div><div style="left:39px;top:284px;width:156px;height:1px;background:#ECE9D8"></div><div style="left:51px;top:269px;width:62px;height:15px;overflow:hidden"><span style="left:0;top:2px;font-size:11px;line-height:13px;letter-spacing:-0.15px;">Duplex</span></div><div style="left:116px;top:269px;width:79px;height:15px;overflow:hidden"><span style="left:0;top:2px;font-size:11px;line-height:13px;color:#000080">dmNone</span></div><div style="left:39px;top:300px;width:156px;height:1px;background:#ECE9D8"></div><div style="left:51px;top:285px;width:62px;height:15px;overflow:hidden"><span style="left:0;top:2px;font-size:11px;line-height:13px;letter-spacing:-0.15px;">Font</span></div><div style="left:41px;top:288px;width:9px;height:9px;border:1px solid #808080;background:#fff"></div><div style="left:43px;top:292px;width:5px;height:1px;background:#000"></div><div style="left:45px;top:290px;width:1px;height:5px;background:#000"></div><div style="left:116px;top:285px;width:79px;height:15px;overflow:hidden"><span style="left:0;top:2px;font-size:11px;line-height:13px;color:#000080">(TFont)</span></div><div style="left:39px;top:316px;width:156px;height:1px;background:#ECE9D8"></div><div style="left:51px;top:301px;width:62px;height:15px;overflow:hidden"><span style="left:0;top:2px;font-size:11px;line-height:13px;letter-spacing:-0.15px;">Frame</span></div><div style="left:41px;top:304px;width:9px;height:9px;border:1px solid #808080;background:#fff"></div><div style="left:43px;top:308px;width:5px;height:1px;background:#000"></div><div style="left:45px;top:306px;width:1px;height:5px;background:#000"></div><div style="left:116px;top:301px;width:79px;height:15px;overflow:hidden"><span style="left:0;top:2px;font-size:11px;line-height:13px;color:#000080">(TfrxFrame)</span></div><div style="left:39px;top:332px;width:156px;height:1px;background:#ECE9D8"></div><div style="left:51px;top:317px;width:62px;height:15px;overflow:hidden"><span style="left:0;top:2px;font-size:11px;line-height:13px;letter-spacing:-0.15px;">LargeDesignHeight</span></div><div style="left:116px;top:319px;width:11px;height:11px;background:#fff;border:1px solid #808080;box-shadow:inset 1px 1px 0 #404040"></div><div style="left:130px;top:317px;width:65px;height:15px;overflow:hidden"><span style="left:0;top:2px;font-size:11px;line-height:13px;color:#000080">False</span></div><div style="left:39px;top:348px;width:156px;height:1px;background:#ECE9D8"></div><div style="left:51px;top:333px;width:62px;height:15px;overflow:hidden"><span style="left:0;top:2px;font-size:11px;line-height:13px;letter-spacing:-0.15px;">LeftMargin</span></div><div style="left:116px;top:333px;width:79px;height:15px;overflow:hidden"><span style="left:0;top:2px;font-size:11px;line-height:13px;color:#000080">2</span></div><div style="left:39px;top:364px;width:156px;height:1px;background:#ECE9D8"></div><div style="left:51px;top:349px;width:62px;height:15px;overflow:hidden"><span style="left:0;top:2px;font-size:11px;line-height:13px;letter-spacing:-0.15px;">MirrorMargins</span></div><div style="left:116px;top:351px;width:11px;height:11px;background:#fff;border:1px solid #808080;box-shadow:inset 1px 1px 0 #404040"></div><div style="left:130px;top:349px;width:65px;height:15px;overflow:hidden"><span style="left:0;top:2px;font-size:11px;line-height:13px;color:#000080">False</span></div><div style="left:39px;top:380px;width:156px;height:1px;background:#ECE9D8"></div><div style="left:51px;top:365px;width:62px;height:15px;overflow:hidden"><span style="left:0;top:2px;font-size:11px;line-height:13px;letter-spacing:-0.15px;font-weight:bold;">Name</span></div><div style="left:39px;top:396px;width:156px;height:1px;background:#ECE9D8"></div><div style="left:51px;top:381px;width:62px;height:15px;overflow:hidden"><span style="left:0;top:2px;font-size:11px;line-height:13px;letter-spacing:-0.15px;">Orientation</span></div><div style="left:116px;top:381px;width:79px;height:15px;overflow:hidden"><span style="left:0;top:2px;font-size:11px;line-height:13px;color:#000080">poPortrait</span></div><div style="left:39px;top:412px;width:156px;height:1px;background:#ECE9D8"></div><div style="left:51px;top:397px;width:62px;height:15px;overflow:hidden"><span style="left:0;top:2px;font-size:11px;line-height:13px;letter-spacing:-0.15px;">OutlineText</span></div><div style="left:39px;top:428px;width:156px;height:1px;background:#ECE9D8"></div><div style="left:51px;top:413px;width:62px;height:15px;overflow:hidden"><span style="left:0;top:2px;font-size:11px;line-height:13px;letter-spacing:-0.15px;">PaperHeight</span></div><div style="left:116px;top:413px;width:79px;height:15px;overflow:hidden"><span style="left:0;top:2px;font-size:11px;line-height:13px;color:#000080">29,70</span></div><div style="left:39px;top:444px;width:156px;height:1px;background:#ECE9D8"></div><div style="left:51px;top:429px;width:62px;height:15px;overflow:hidden"><span style="left:0;top:2px;font-size:11px;line-height:13px;letter-spacing:-0.15px;">PaperWidth</span></div><div style="left:116px;top:429px;width:79px;height:15px;overflow:hidden"><span style="left:0;top:2px;font-size:11px;line-height:13px;color:#000080">21</span></div><div style="left:39px;top:460px;width:156px;height:1px;background:#ECE9D8"></div><div style="left:51px;top:445px;width:62px;height:15px;overflow:hidden"><span style="left:0;top:2px;font-size:11px;line-height:13px;letter-spacing:-0.15px;">PrintIfEmpty</span></div><div style="left:116px;top:447px;width:11px;height:11px;background:#fff;border:1px solid #808080;box-shadow:inset 1px 1px 0 #404040"></div><svg style="left:118px;top:449px" width="8" height="8"><path d="M0.5 3L2.8 5.5L7.2 0.8" stroke="#000" stroke-width="1.6" fill="none"/></svg><div style="left:130px;top:445px;width:65px;height:15px;overflow:hidden"><span style="left:0;top:2px;font-size:11px;line-height:13px;color:#000080">True</span></div><div style="left:39px;top:476px;width:156px;height:1px;background:#ECE9D8"></div><div style="left:51px;top:461px;width:62px;height:15px;overflow:hidden"><span style="left:0;top:2px;font-size:11px;line-height:13px;letter-spacing:-0.15px;">PrintOnPreviousPage</span></div><div style="left:116px;top:463px;width:11px;height:11px;background:#fff;border:1px solid #808080;box-shadow:inset 1px 1px 0 #404040"></div><div style="left:130px;top:461px;width:65px;height:15px;overflow:hidden"><span style="left:0;top:2px;font-size:11px;line-height:13px;color:#000080">False</span></div><div style="left:39px;top:492px;width:156px;height:1px;background:#ECE9D8"></div><div style="left:51px;top:477px;width:62px;height:15px;overflow:hidden"><span style="left:0;top:2px;font-size:11px;line-height:13px;letter-spacing:-0.15px;">RightMargin</span></div><div style="left:116px;top:477px;width:79px;height:15px;overflow:hidden"><span style="left:0;top:2px;font-size:11px;line-height:13px;color:#000080">0,60</span></div><div style="left:39px;top:508px;width:156px;height:1px;background:#ECE9D8"></div><div style="left:51px;top:493px;width:62px;height:15px;overflow:hidden"><span style="left:0;top:2px;font-size:11px;line-height:13px;letter-spacing:-0.15px;">Tag</span></div><div style="left:116px;top:493px;width:79px;height:15px;overflow:hidden"><span style="left:0;top:2px;font-size:11px;line-height:13px;color:#000080">0</span></div><div style="left:39px;top:524px;width:156px;height:1px;background:#ECE9D8"></div><div style="left:51px;top:509px;width:62px;height:15px;overflow:hidden"><span style="left:0;top:2px;font-size:11px;line-height:13px;letter-spacing:-0.15px;">TitleBeforeHeader</span></div><div style="left:116px;top:511px;width:11px;height:11px;background:#fff;border:1px solid #808080;box-shadow:inset 1px 1px 0 #404040"></div><svg style="left:118px;top:513px" width="8" height="8"><path d="M0.5 3L2.8 5.5L7.2 0.8" stroke="#000" stroke-width="1.6" fill="none"/></svg><div style="left:130px;top:509px;width:65px;height:15px;overflow:hidden"><span style="left:0;top:2px;font-size:11px;line-height:13px;color:#000080">True</span></div><div style="left:39px;top:540px;width:156px;height:1px;background:#ECE9D8"></div><div style="left:51px;top:525px;width:62px;height:15px;overflow:hidden"><span style="left:0;top:2px;font-size:11px;line-height:13px;letter-spacing:-0.15px;">TopMargin</span></div><div style="left:116px;top:525px;width:79px;height:15px;overflow:hidden"><span style="left:0;top:2px;font-size:11px;line-height:13px;color:#000080">0,50</span></div><div style="left:39px;top:556px;width:156px;height:1px;background:#ECE9D8"></div><div style="left:51px;top:541px;width:62px;height:15px;overflow:hidden"><span style="left:0;top:2px;font-size:11px;line-height:13px;letter-spacing:-0.15px;">Visible</span></div><div style="left:116px;top:543px;width:11px;height:11px;background:#fff;border:1px solid #808080;box-shadow:inset 1px 1px 0 #404040"></div><svg style="left:118px;top:545px" width="8" height="8"><path d="M0.5 3L2.8 5.5L7.2 0.8" stroke="#000" stroke-width="1.6" fill="none"/></svg><div style="left:130px;top:541px;width:65px;height:15px;overflow:hidden"><span style="left:0;top:2px;font-size:11px;line-height:13px;color:#000080">True</span></div><div style="left:113px;top:189px;width:1px;height:368px;background:#ECE9D8"></div><div style="left:179px;top:190px;width:14px;height:13px;background:linear-gradient(#fff,#E8E8F0);border:1px solid #1C3C7C;border-radius:3px"><div style="left:2px;top:5px;width:2px;height:2px;background:#000"></div><div style="left:5px;top:5px;width:2px;height:2px;background:#000"></div><div style="left:8px;top:5px;width:2px;height:2px;background:#000"></div></div></div>
<div class="a" style="left:38px;top:650px;width:157px;height:62px;background:#F5F4EC;border:1px solid #ECE9D8;box-shadow:inset 1px 1px 0 #D0CDBE"><span style="left:2px;top:2px;font-size:11px;font-weight:bold">BackPicture</span><span style="left:1px;top:18px;font-size:11px">Фоновая картинка страницы</span></div>
<div class="a" style="left:196px;top:123px;width:3px;height:592px;background:#FCFCFE"></div>
<div class="a" style="left:0px;top:102px;width:1px;height:616px;background:#C5C2B2"></div>
<div class="a" style="left:31px;top:102px;width:1px;height:616px;background:#fff"></div>
<div class="a" style="left:32px;top:102px;width:1px;height:616px;background:#ACA899"></div>
<div class="a" style="left:2px;top:102px;width:29px;height:29px;background:#fff;border:1px solid #8AA0B8;border-radius:3px"></div>
<svg class="a" style="left:12px;top:107px" width="12" height="18" viewBox="0 0 12 18"><path d="M1.5 1.5V13.5L4.5 10.8L6.8 16L8.8 15.2L6.6 10.2H10.5Z" fill="#fff" stroke="#000" stroke-width="1"/></svg>
<svg class="a" style="left:7px;top:136px" width="20" height="19" viewBox="0 0 20 19"><path d="M5.5 17.5L2 11.5Q1 9.5 2.5 9.2Q3.8 9 5 11L6 12.5L5.5 4.5Q5.5 3 6.7 3Q7.8 3 8 4.5L8.5 9L8.7 2.7Q8.8 1.2 10 1.2Q11.2 1.2 11.2 2.7L11.3 9L12.2 3.5Q12.5 2.2 13.6 2.4Q14.6 2.6 14.4 4L13.8 9.6L15.2 6.2Q15.8 5 16.7 5.4Q17.5 5.8 17.1 7.2L15.5 13Q14.8 15.5 13.8 17.5Z" fill="#fff" stroke="#000" stroke-width="1" stroke-linejoin="round"/></svg>
<svg class="a" style="left:7px;top:165px" width="21" height="21" viewBox="0 0 21 21"><circle cx="8" cy="8" r="6.3" fill="#fff" stroke="#000" stroke-width="1.4"/><path d="M5 8H11M8 5V11" stroke="#008000" stroke-width="2"/><path d="M12.8 12.8L17.8 17.8" stroke="#000080" stroke-width="2.6" stroke-linecap="round"/><path d="M13.5 13L17.6 17.1" stroke="#4060E0" stroke-width="0.8"/></svg>
<span class="a " style="left:8px;top:192px;font-family:'Liberation Serif',serif;font-size:22px;line-height:24px;-webkit-text-stroke:0.3px #000">T</span>
<svg class="a" style="left:19px;top:203px" width="6" height="11" viewBox="0 0 6 11"><path d="M0.5 0.5H2.2M3.8 0.5H5.5M0.5 10.5H2.2M3.8 10.5H5.5M3 0.5V10.5" stroke="#000" stroke-width="1" fill="none"/></svg>
<svg class="a" style="left:7px;top:224px" width="20" height="18" viewBox="0 0 20 18"><path d="M14 2L18 5L12 11L9 8Z" fill="#B8B5A5" stroke="#ACA899"/><path d="M9 8L12 11L6 15L3 14Z" fill="#D8D5C5" stroke="#ACA899"/><path d="M2 16H5" stroke="#ACA899"/><path d="M15 3L19 6" stroke="#fff"/></svg>
<svg class="a" style="left:6px;top:253px" width="22" height="20" viewBox="0 0 22 20"><path d="M3 1V6M0.5 3.5H5.5M1 8H6" stroke="#ACA899" stroke-width="1.3" fill="none"/><path d="M11 2.5H18V5.5H11M1 10.5H8V13.5H1M12 13.5H19V17.5H12" stroke="#ACA899" stroke-width="1.3" fill="none"/><path d="M11 3.5H19V6.5H12M2 11.5H9V14.5H2M13 14.5H20V18.5H13" stroke="#fff" stroke-width="1" fill="none" opacity=".8"/></svg>
<div class="a" style="left:8px;top:283px;width:19px;height:14px;background:#fff;border-right:1px solid #000;border-bottom:1px solid #000"><span style="left:1px;top:-2px;font-size:13px;line-height:15px;font-weight:bold;color:#007000;letter-spacing:-0.5px">ab</span></div>
<div class="a" style="left:8px;top:312px;width:20px;height:15px;background:#7FE8F0;border-right:1px solid #000;border-bottom:1px solid #000"><div style="left:0;top:9px;width:19px;height:5px;background:#0000C0"></div><div style="left:3px;top:2px;width:5px;height:5px;border-radius:50%;background:#F8F060"></div><div style="left:11px;top:4px;width:0;height:0;border-left:3px solid transparent;border-right:3px solid transparent;border-bottom:7px solid #00A030"></div><div style="left:1px;top:10px;width:4px;height:2px;background:#E0C020"></div></div>
<svg class="a" style="left:7px;top:339px" width="22" height="21" viewBox="0 0 22 21"><rect x="1.5" y="1.5" width="13" height="13" fill="#fff" stroke="none"/><path d="M1.5 15.5H15.5V1.5" stroke="#000" fill="none"/><path d="M3 4H12M3 6.5H12M3 9H12M3 11.5H9" stroke="#008000" stroke-width="1"/><rect x="8.5" y="11.5" width="11" height="7" fill="#fff" stroke="#000"/><path d="M10.5 14H17.5M10.5 16H17.5" stroke="#008000"/></svg>
<svg class="a" style="left:6px;top:368px" width="22" height="20" viewBox="0 0 22 20"><path d="M12 3L17 1.5L19.5 5L10 13L7 11Z" fill="#F0E020" stroke="#000" stroke-width="1"/><path d="M7 11L10 13L4.5 16Z" fill="#fff" stroke="#000"/><path d="M1 17.5H15" stroke="#000" stroke-width="1.2"/><path d="M13 4L16 8M15 3L18 6.5" stroke="#fff" stroke-width=".8"/></svg>
<div class="a" style="left:8px;top:399px;width:19px;height:14px;background:#fff;border-right:1px solid #000;border-bottom:1px solid #000"><span style="left:0px;top:-1px;font-size:12px;line-height:14px;font-weight:bold;color:#007000;letter-spacing:-0.3px">#Σ</span></div>
<div class="a" style="left:8px;top:426px;width:16px;height:15px;background:#fff;border-right:1px solid #000;border-bottom:1px solid #000"><div style="left:1px;top:1px;width:6px;height:6px;border-radius:50%;background:#00D040;border:1px solid #008000"></div><div style="left:5px;top:4px;width:0;height:0;border-left:9px solid transparent;border-bottom:9px solid #0020E0"></div></div>
<svg class="a" style="left:22px;top:441px" width="5" height="5" viewBox="0 0 5 5"><path d="M4.5 0.5V4.5H0.5Z" fill="#000"/></svg>
<svg class="a" style="left:6px;top:454px" width="20" height="20" viewBox="0 0 20 20"><path d="M6 5L10 2H15V11L11 14H6Z" fill="#E8E020" stroke="#000" stroke-width=".8"/><path d="M10 2V11" stroke="#807000"/><path d="M1 14L5 6L8 14Z" fill="#0020C0"/><ellipse cx="11" cy="14" rx="5" ry="3.5" fill="#40E8E8" stroke="#008080" stroke-width=".6"/><ellipse cx="13.5" cy="14" rx="2" ry="3" fill="#D8FFFF"/></svg>
<svg class="a" style="left:22px;top:470px" width="5" height="5" viewBox="0 0 5 5"><path d="M4.5 0.5V4.5H0.5Z" fill="#000"/></svg>
<div class="a" style="left:575px;top:48px;width:1px;height:25px;background:#ACA899"></div>
<div class="a" style="left:576px;top:48px;width:1px;height:26px;background:#fff"></div>
<div class="a" style="left:576px;top:73px;width:448px;height:1px;background:#ECE9D8"></div>
<div class="a" style="left:955px;top:75px;width:1px;height:25px;background:#ACA899"></div>
<div class="a" style="left:956px;top:75px;width:1px;height:26px;background:#fff"></div>
<div class="a" style="left:956px;top:100px;width:68px;height:2px;background:#ECE9D8"></div>
<div class="a" style="left:650px;top:75px;width:1px;height:25px;background:#ACA899"></div>
<div class="a" style="left:651px;top:75px;width:1px;height:25px;background:#fff"></div>
<div class="a" style="left:4px;top:50px;width:3px;height:21px;background:repeating-linear-gradient(180deg,#ACA899 0,#ACA899 1px,transparent 1px,transparent 2px)"></div>
<div class="a" style="left:4px;top:77px;width:3px;height:21px;background:repeating-linear-gradient(180deg,#ACA899 0,#ACA899 1px,transparent 1px,transparent 2px)"></div>
<div class="a" style="left:655px;top:77px;width:3px;height:21px;background:repeating-linear-gradient(180deg,#ACA899 0,#ACA899 1px,transparent 1px,transparent 2px)"></div>
<svg class="a" style="left:14px;top:51px" width="14" height="16" viewBox="0 0 14 16"><path d="M1.5 1.5H8.5L12.5 5.5V14.5H1.5Z" fill="none" stroke="#8C8C8C"/><path d="M8.5 1.5V5.5H12.5" fill="none" stroke="#8C8C8C"/></svg>
<svg class="a" style="left:35px;top:51px" width="18" height="16" viewBox="0 0 18 16"><path d="M1.5 14.5V5.5H4.5L5.5 4.5H9.5V6.5" fill="none" stroke="#8C8C8C"/><path d="M1.5 14.5L5 8.5H16.5L13 14.5Z" fill="none" stroke="#8C8C8C"/><path d="M11 3.5Q13.5 1 15.5 3.5M15.8 1V4H13" fill="none" stroke="#8C8C8C"/></svg>
<svg class="a" style="left:59px;top:52px" width="16" height="16" viewBox="0 0 16 16"><rect x="1.5" y="1.5" width="13" height="13" fill="none" stroke="#8C8C8C"/><path d="M4.5 1.5V6.5H11.5V1.5M4.5 14.5V10.5H11.5V14.5" fill="none" stroke="#8C8C8C"/><rect x="5" y="11" width="4" height="3" fill="#8C8C8C"/></svg>
<svg class="a" style="left:81px;top:51px" width="18" height="17" viewBox="0 0 18 17"><path d="M1.5 1.5H8.5L11.5 4.5V6M1.5 1.5V14.5H8" fill="none" stroke="#8C8C8C"/><circle cx="11" cy="10" r="3.5" fill="none" stroke="#8C8C8C"/><path d="M13.5 12.5L16 15" stroke="#8C8C8C" stroke-width="2"/></svg>
<div class="a" style="left:105px;top:51px;width:1px;height:20px;background:#ACA899"></div>
<div class="a" style="left:106px;top:51px;width:1px;height:20px;background:#fff"></div>
<svg class="a" style="left:112px;top:51px" width="16" height="16" viewBox="0 0 16 16"><path d="M4.5 4.5H13.5V14.5H4.5Z" fill="none" stroke="#8C8C8C"/><path d="M3 0.5V6M0.5 3H5.5M1 1L5 5M5 1L1 5" stroke="#8C8C8C" stroke-width=".8"/></svg>
<svg class="a" style="left:135px;top:51px" width="17" height="16" viewBox="0 0 17 16"><path d="M3.5 6.5H14.5V14.5H3.5Z" fill="none" stroke="#8C8C8C"/><path d="M7 4.5H14.5V6" fill="none" stroke="#8C8C8C"/><path d="M3 0.5V6M0.5 3H5.5M1 1L5 5M5 1L1 5" stroke="#8C8C8C" stroke-width=".8"/></svg>
<svg class="a" style="left:159px;top:52px" width="15" height="15" viewBox="0 0 15 15"><rect x="2.5" y="2.5" width="10" height="11" fill="none" stroke="#8C8C8C"/><path d="M1 1L14 14M14 1L1 14" stroke="#8C8C8C" stroke-width="1.6"/></svg>
<div class="a" style="left:186px;top:55px;width:11px;height:12px;background:#fff;border-right:1px solid #000;border-bottom:1px solid #000"><svg style="left:1px;top:0px" width="9" height="11"><path d="M1.5 1.5L4.5 4.5L7.5 1.5M1.5 6L4.5 9L7.5 6" stroke="#008000" stroke-width="1.3" fill="none"/></svg></div>
<div class="a" style="left:205px;top:51px;width:1px;height:20px;background:#ACA899"></div>
<div class="a" style="left:206px;top:51px;width:1px;height:20px;background:#fff"></div>
<span class="a " style="left:216px;top:52px;font-family:'Liberation Serif',serif;font-style:italic;font-weight:bold;font-size:15px;line-height:16px;color:#8C8C8C">f</span>
<span class="a " style="left:221px;top:57px;font-family:'Liberation Serif',serif;font-style:italic;font-weight:bold;font-size:9px;line-height:10px;color:#8C8C8C">x</span>
<div class="a" style="left:236px;top:51px;width:1px;height:20px;background:#ACA899"></div>
<div class="a" style="left:237px;top:51px;width:1px;height:20px;background:#fff"></div>
<svg class="a" style="left:245px;top:52px" width="13" height="16" viewBox="0 0 13 16"><path d="M3.5 1L8 10M9.5 1L5 10" stroke="#8C8C8C" stroke-width="1.1" fill="none"/><circle cx="3.5" cy="12" r="2" fill="none" stroke="#8C8C8C"/><circle cx="9.5" cy="12" r="2" fill="none" stroke="#8C8C8C"/></svg>
<svg class="a" style="left:266px;top:52px" width="17" height="15" viewBox="0 0 17 15"><path d="M1.5 1.5H6.5L8.5 3.5V9.5H1.5Z" fill="#ECE9D8" stroke="#8C8C8C"/><path d="M7.5 4.5H12.5L15.5 7.5V13.5H7.5Z" fill="#ECE9D8" stroke="#8C8C8C"/><path d="M9 8H14M9 10H14M9 12H14" stroke="#8C8C8C" stroke-width=".8"/></svg>
<svg class="a" style="left:289px;top:52px" width="19" height="17" viewBox="0 0 19 17"><rect x="1.5" y="2.5" width="13" height="12" rx="1" fill="#606060" stroke="#000"/><rect x="3" y="4.5" width="10" height="9" fill="#B0B0B0"/><rect x="5" y="0.5" width="6" height="3.5" fill="#C0C0C0" stroke="#000"/><rect x="8.500" y="8.500" width="9" height="6" fill="#fff" stroke="#000090" stroke-width="1.4"/><path d="M10 11.500H14" stroke="#000090"/></svg>
<svg class="a" style="left:312px;top:51px" width="19" height="17" viewBox="0 0 19 17"><path d="M14 4L17.500 6.500L13 11L10 9Z" fill="#008000" stroke="#004000" stroke-width=".6"/><path d="M6 8L10 6L14 10L11 15L4 13Z" fill="#F8F080" stroke="#404000" stroke-width=".8"/><path d="M6 9L9 14M8 8L11 13" stroke="#808000" stroke-width=".7"/><path d="M4 0.500V6M1.200 3.200H6.800" stroke="#E8D800" stroke-width="1.400"/></svg>
<div class="a" style="left:336px;top:51px;width:1px;height:20px;background:#ACA899"></div>
<div class="a" style="left:337px;top:51px;width:1px;height:20px;background:#fff"></div>
<svg class="a" style="left:345px;top:55px" width="15" height="10" viewBox="0 0 15 10"><path d="M2 5.500Q6 0.500 11 3Q13.500 5 12 8" fill="none" stroke="#8C8C8C" stroke-width="1.300"/><path d="M1 2V7H6Z" fill="#8C8C8C"/></svg>
<svg class="a" style="left:368px;top:55px" width="15" height="10" viewBox="0 0 15 10"><path d="M13 5.500Q9 0.500 4 3Q1.500 5 3 8" fill="none" stroke="#8C8C8C" stroke-width="1.300"/><path d="M14 2V7H9Z" fill="#8C8C8C"/></svg>
<div class="a" style="left:390px;top:51px;width:1px;height:20px;background:#ACA899"></div>
<div class="a" style="left:391px;top:51px;width:1px;height:20px;background:#fff"></div>
<svg class="a" style="left:397px;top:51px" width="18" height="17" viewBox="0 0 18 17"><rect x="2.500" y="2.500" width="13" height="12" fill="none" stroke="#8C8C8C"/><rect x="6.500" y="6.500" width="9" height="8" fill="none" stroke="#8C8C8C"/><g fill="#8C8C8C"><rect x="1" y="1" width="3" height="3"/><rect x="14" y="1" width="3" height="3"/><rect x="1" y="13" width="3" height="3"/><rect x="14" y="13" width="3" height="3"/></g></svg>
<svg class="a" style="left:420px;top:51px" width="18" height="17" viewBox="0 0 18 17"><rect x="2.500" y="2.500" width="9" height="8" fill="none" stroke="#8C8C8C"/><rect x="6.500" y="5.500" width="9" height="9" fill="none" stroke="#8C8C8C"/><g fill="#8C8C8C"><rect x="1" y="1" width="3" height="3"/><rect x="10" y="1" width="3" height="3"/><rect x="5" y="13" width="3" height="3"/><rect x="14" y="13" width="3" height="3"/><rect x="14" y="4" width="3" height="3"/></g></svg>
<div class="a" style="left:444px;top:51px;width:1px;height:20px;background:#ACA899"></div>
<div class="a" style="left:445px;top:51px;width:1px;height:20px;background:#fff"></div>
<div class="a" style="left:450px;top:49px;width:22px;height:23px;background:#fff;border:1px solid #7F9DB9;border-radius:3px"></div>
<div class="a" style="left:472px;top:49px;width:22px;height:23px;background:#fff;border:1px solid #7F9DB9;border-radius:3px"></div>
<svg class="a" style="left:454px;top:53px" width="14" height="14" viewBox="0 0 14 14"><path d="M3.500 0V14M6.500 0V14M9.500 0V14M12.500 0V14M0 2.500H14M0 5.500H14M0 8.500H14M0 11.500H14" stroke="#000" stroke-width="1"/></svg>
<svg class="a" style="left:476px;top:53px" width="14" height="14" viewBox="0 0 14 14"><path d="M3.500 0V14M6.500 0V14M9.500 0V14M12.500 0V14M0 2.500H14M0 5.500H14M0 8.500H14M0 11.500H14" stroke="#808080" stroke-width="1"/></svg>
<svg class="a" style="left:481px;top:54px" width="10" height="15" viewBox="0 0 10 15"><path d="M1.500 1.500V11.500L4 9.200L6 13.500L7.800 12.700L5.800 8.600H9Z" fill="#fff" stroke="#000" stroke-width="1"/></svg>
<svg class="a" style="left:499px;top:53px" width="15" height="15" viewBox="0 0 15 15"><rect x="1.500" y="1.500" width="12" height="12" fill="none" stroke="#8C8C8C"/><path d="M7.500 1.500V13.500M1.500 7.500H13.500" stroke="#8C8C8C"/></svg>
<div class="a" style="left:525px;top:53px;width:45px;height:16px;background:#fff;border:1px solid #fff"><span style="left:2px;top:0px;font-size:11px;line-height:14px">75%</span><div style="left:34px;top:0;width:9px;height:14px;background:#ECE9D8"></div><div style="left:35px;top:5px;width:0;height:0;border-left:3.500px solid transparent;border-right:3.500px solid transparent;border-top:4px solid #000"></div></div>
<div class="a" style="left:12px;top:79px;width:89px;height:16px;border:1px solid #fff"><div style="left:80px;top:6px;width:0;height:0;border-left:3.500px solid transparent;border-right:3.500px solid transparent;border-top:4px solid #000"></div></div>
<div class="a" style="left:110px;top:79px;width:141px;height:16px;background:#fff"><span style="left:2px;top:-2px;font-family:'Liberation Serif',serif;font-weight:bold;font-size:11px;line-height:13px;color:#606060">T</span><span style="left:6px;top:1px;font-family:'Liberation Serif',serif;font-weight:bold;font-size:13px;line-height:15px">T</span><span style="left:17px;top:1px;font-size:11px;line-height:14px">Arial</span><div style="left:131px;top:1px;width:9px;height:14px;background:#ECE9D8"></div><div style="left:132px;top:6px;width:0;height:0;border-left:3.500px solid transparent;border-right:3.500px solid transparent;border-top:4px solid #000"></div></div>
<div class="a" style="left:260px;top:79px;width:36px;height:16px;background:#fff"><span style="left:2px;top:1px;font-size:11px;line-height:14px">10</span><div style="left:26px;top:1px;width:9px;height:14px;background:#ECE9D8"></div><div style="left:27px;top:6px;width:0;height:0;border-left:3.500px solid transparent;border-right:3.500px solid transparent;border-top:4px solid #000"></div></div>
<span class="a " style="left:308px;top:79px;font-family:'Liberation Serif',serif;font-weight:bold;font-size:14px;line-height:16px">B</span>
<span class="a " style="left:333px;top:79px;font-family:'Liberation Serif',serif;font-weight:bold;font-style:italic;font-size:14px;line-height:16px">I</span>
<span class="a " style="left:354px;top:79px;font-family:'Liberation Serif',serif;font-weight:bold;font-size:13px;line-height:16px;text-decoration:underline">U</span>
<div class="a" style="left:375px;top:78px;width:1px;height:20px;background:#ACA899"></div>
<div class="a" style="left:376px;top:78px;width:1px;height:20px;background:#fff"></div>
<span class="a " style="left:384px;top:77px;font-family:'Liberation Serif',serif;font-weight:bold;font-size:13px;line-height:14px;color:#000080">T</span>
<span class="a " style="left:389px;top:79px;font-family:'Liberation Serif',serif;font-weight:bold;font-size:15px;line-height:16px">T</span>
<span class="a " style="left:408px;top:77px;font-family:'Liberation Serif',serif;font-weight:bold;font-size:14px;line-height:15px;color:#000080">A</span>
<div class="a" style="left:406px;top:91px;width:16px;height:3px;background:#008000"></div>
<svg class="a" style="left:429px;top:80px" width="17" height="14" viewBox="0 0 17 14"><path d="M9 6L13 1.500L15.500 3.500L11.500 8.500L8 9.500Z" fill="#ECE9D8" stroke="#8C8C8C"/><path d="M1 12.500H16" stroke="#8C8C8C" stroke-width="2"/></svg>
<svg class="a" style="left:453px;top:80px" width="15" height="14" viewBox="0 0 15 14"><circle cx="9" cy="4" r="3" fill="none" stroke="#8C8C8C" stroke-width="1.500"/><circle cx="4" cy="9" r="2.500" fill="none" stroke="#8C8C8C" stroke-width="1.500"/><path d="M4 12L12 7M6 4L12 11" stroke="#8C8C8C" stroke-width="1.500"/></svg>
<div class="a" style="left:475px;top:78px;width:1px;height:20px;background:#ACA899"></div>
<div class="a" style="left:476px;top:78px;width:1px;height:20px;background:#fff"></div>
<svg class="a" style="left:485px;top:81px" width="13" height="12" viewBox="0 0 13 12"><rect x="0" y="0" width="13" height="1" fill="#8C8C8C"/><rect x="0" y="2" width="9" height="1" fill="#8C8C8C"/><rect x="0" y="4" width="13" height="1" fill="#8C8C8C"/><rect x="0" y="6" width="9" height="1" fill="#8C8C8C"/><rect x="0" y="8" width="13" height="1" fill="#8C8C8C"/><rect x="0" y="10" width="9" height="1" fill="#8C8C8C"/></svg>
<svg class="a" style="left:507px;top:81px" width="13" height="12" viewBox="0 0 13 12"><rect x="0" y="0" width="13" height="1" fill="#8C8C8C"/><rect x="2" y="2" width="9" height="1" fill="#8C8C8C"/><rect x="0" y="4" width="13" height="1" fill="#8C8C8C"/><rect x="2" y="6" width="9" height="1" fill="#8C8C8C"/><rect x="0" y="8" width="13" height="1" fill="#8C8C8C"/><rect x="2" y="10" width="9" height="1" fill="#8C8C8C"/></svg>
<svg class="a" style="left:530px;top:81px" width="13" height="12" viewBox="0 0 13 12"><rect x="0" y="0" width="13" height="1" fill="#8C8C8C"/><rect x="4" y="2" width="9" height="1" fill="#8C8C8C"/><rect x="0" y="4" width="13" height="1" fill="#8C8C8C"/><rect x="4" y="6" width="9" height="1" fill="#8C8C8C"/><rect x="0" y="8" width="13" height="1" fill="#8C8C8C"/><rect x="4" y="10" width="9" height="1" fill="#8C8C8C"/></svg>
<svg class="a" style="left:553px;top:81px" width="13" height="12" viewBox="0 0 13 12"><rect x="0" y="0" width="13" height="1" fill="#8C8C8C"/><rect x="0" y="2" width="13" height="1" fill="#8C8C8C"/><rect x="0" y="4" width="13" height="1" fill="#8C8C8C"/><rect x="0" y="6" width="13" height="1" fill="#8C8C8C"/><rect x="0" y="8" width="13" height="1" fill="#8C8C8C"/><rect x="0" y="10" width="13" height="1" fill="#8C8C8C"/></svg>
<div class="a" style="left:575px;top:78px;width:1px;height:20px;background:#ACA899"></div>
<div class="a" style="left:576px;top:78px;width:1px;height:20px;background:#fff"></div>
<svg class="a" style="left:585px;top:81px" width="14" height="13" viewBox="0 0 14 13"><rect x="0" y="0" width="1" height="13" fill="#8C8C8C"/><rect x="2" y="0" width="1" height="9" fill="#8C8C8C"/><rect x="4" y="0" width="1" height="13" fill="#8C8C8C"/><rect x="6" y="0" width="1" height="9" fill="#8C8C8C"/><rect x="8" y="0" width="1" height="13" fill="#8C8C8C"/><rect x="10" y="0" width="1" height="9" fill="#8C8C8C"/><rect x="12" y="0" width="1" height="13" fill="#8C8C8C"/></svg>
<svg class="a" style="left:608px;top:81px" width="14" height="13" viewBox="0 0 14 13"><rect x="0" y="2" width="1" height="9" fill="#8C8C8C"/><rect x="2" y="0" width="1" height="13" fill="#8C8C8C"/><rect x="4" y="2" width="1" height="9" fill="#8C8C8C"/><rect x="6" y="0" width="1" height="13" fill="#8C8C8C"/><rect x="8" y="2" width="1" height="9" fill="#8C8C8C"/><rect x="10" y="0" width="1" height="13" fill="#8C8C8C"/><rect x="12" y="2" width="1" height="9" fill="#8C8C8C"/></svg>
<svg class="a" style="left:631px;top:81px" width="14" height="13" viewBox="0 0 14 13"><rect x="0" y="0" width="1" height="13" fill="#8C8C8C"/><rect x="2" y="4" width="1" height="9" fill="#8C8C8C"/><rect x="4" y="0" width="1" height="13" fill="#8C8C8C"/><rect x="6" y="4" width="1" height="9" fill="#8C8C8C"/><rect x="8" y="0" width="1" height="13" fill="#8C8C8C"/><rect x="10" y="4" width="1" height="9" fill="#8C8C8C"/><rect x="12" y="0" width="1" height="13" fill="#8C8C8C"/></svg>
<div class="a" style="left:665px;top:81px;width:14px;height:11px;background:#fff;border:1px solid #909090;border-top:2px solid #000"></div>
<div class="a" style="left:688px;top:81px;width:14px;height:11px;background:#fff;border:1px solid #909090;border-bottom:2px solid #000"></div>
<div class="a" style="left:711px;top:81px;width:14px;height:11px;background:#fff;border:1px solid #909090;border-left:2px solid #000"></div>
<div class="a" style="left:734px;top:81px;width:14px;height:11px;background:#fff;border:1px solid #909090;border-right:2px solid #000"></div>
<div class="a" style="left:756px;top:78px;width:1px;height:20px;background:#ACA899"></div>
<div class="a" style="left:757px;top:78px;width:1px;height:20px;background:#fff"></div>
<div class="a" style="left:765px;top:81px;width:14px;height:11px;background:#fff;border:2px solid #000"></div>
<div class="a" style="left:788px;top:81px;width:14px;height:11px;background:#fff;border:1px dotted #000"></div>
<div class="a" style="left:811px;top:81px;width:14px;height:12px;background:#000"><div style="left:0;top:0;width:12px;height:9px;background:#fff"></div></div>
<div class="a" style="left:811px;top:90px;width:3px;height:3px;background:#ECE9D8"></div>
<div class="a" style="left:833px;top:78px;width:1px;height:20px;background:#ACA899"></div>
<div class="a" style="left:834px;top:78px;width:1px;height:20px;background:#fff"></div>
<svg class="a" style="left:841px;top:78px" width="17" height="14" viewBox="0 0 17 14"><path d="M3 8L8 3L13 8L8 13Z" fill="#fff" stroke="#000" stroke-width="1"/><path d="M8 1V6" stroke="#000"/><path d="M12 5Q16 6 15.500 11Q14 9 12.500 8.500Z" fill="#0030C0"/><ellipse cx="8" cy="3.500" rx="2" ry="1.500" fill="none" stroke="#000080"/></svg>
<div class="a" style="left:841px;top:91px;width:16px;height:3px;background:#008000"></div>
<svg class="a" style="left:864px;top:78px" width="17" height="14" viewBox="0 0 17 14"><path d="M7 11L12 3L15 1.500L14 5L9 12Z" fill="#000080" stroke="#000050" stroke-width=".6"/><path d="M13.500 1L15.500 2.500" stroke="#E8D800" stroke-width="2"/><path d="M1 11.500Q4 10 7 12" stroke="#000080" stroke-width="1.500" fill="none"/></svg>
<div class="a" style="left:864px;top:91px;width:16px;height:3px;background:#008000"></div>
<svg class="a" style="left:887px;top:82px" width="17" height="11" viewBox="0 0 17 11"><path d="M0 1.500H17" stroke="#000" stroke-width="1"/><path d="M0 5.500H17" stroke="#000" stroke-dasharray="3 1"/><path d="M0 9.500H17" stroke="#000" stroke-dasharray="1 1"/></svg>
<div class="a" style="left:914px;top:80px;width:36px;height:16px;background:#fff"><span style="left:2px;top:1px;font-size:11px;line-height:14px">1</span><div style="left:26px;top:1px;width:9px;height:14px;background:#ECE9D8"></div><div style="left:27px;top:6px;width:0;height:0;border-left:3.500px solid transparent;border-right:3.500px solid transparent;border-top:4px solid #000"></div></div>
<div class="a" style="left:0px;top:735px;width:1024px;height:2px;background:linear-gradient(#E2DFCC,#D9D6C2)"></div>
<div class="a" style="left:0px;top:737px;width:1024px;height:1px;background:#F2ECD8"></div>
<div class="a" style="left:0px;top:719px;width:1024px;height:1px;background:#F6F4EA"></div>
<span class="a " style="left:2px;top:723px;font-weight:bold;letter-spacing:-0.66px;line-height:14px">Сантиметры</span>
<svg class="a" style="left:79px;top:720px" width="17" height="17"><rect x="5.5" y="5.5" width="10" height="10" fill="none" stroke="#000" stroke-dasharray="1 1" stroke-dashoffset="0.5"/><path d="M1 5.5H10M5.5 1V10" stroke="#000" stroke-dasharray="1 1"/></svg>
<div class="a" style="left:72px;top:722px;width:1px;height:15px;background:#ACA899"></div>
<div class="a" style="left:1020px;top:722px;width:1px;height:15px;background:#ACA899"></div>
<div class="a" style="left:1021px;top:722px;width:1px;height:15px;background:#fff"></div>
<div class="a" style="left:73px;top:722px;width:1px;height:15px;background:#fff"></div>
<span class="a " style="left:98px;top:723px;line-height:14px;letter-spacing:0.15px">15,56; 3,81</span>
<div id="task" class="a"></div>
<div id="start" class="a"><span>пуск</span><svg style="left:10px;top:5px;transform:rotate(-4deg)" width="21" height="20" viewBox="0 0 20 19"><path d="M2 3.500Q5.500 1.500 9 3.500L8 9Q5 7.500 1 9Z" fill="#E85A28"/><path d="M10.500 3.800Q14 5.500 18 3.500L17 9Q13.500 10.500 9.500 9Z" fill="#78C040"/><path d="M0.800 10.200Q4.500 8.500 8 10.300L7 16Q4 14.500 0 16Z" fill="#4890E8"/><path d="M9.300 10.500Q13 12 17 10.200L16 16Q12.500 17.500 8.300 16Z" fill="#F0C830"/></svg></div>
<div class="a tb" style="left:106px;width:158px;"><svg style="left:9px;top:3px" width="17" height="17" viewBox="0 0 17 17"><path d="M10 1L15 3L8 8.500L12 10L4 16L1.500 14L8 9L4 7.500Z" fill="#F0A020" stroke="#5A3A10" stroke-width=".8"/><path d="M10.500 2.500L5.500 7L9.500 8.500L3.500 14" stroke="#FFE080" stroke-width="1" fill="none"/></svg><span style="left:30px;top:4px;line-height:14px">1. VA - Tiesto - In Se…</span></div>
<div class="a tb" style="left:266px;width:160px;background:#1E52B7;box-shadow:inset 1px 1px 1px #143C90,inset -1px -1px 0 #3A6CD0;"><svg style="left:10px;top:3px" width="16" height="16" viewBox="0 0 16 16"><rect x="0.500" y="0.500" width="15" height="15" fill="#A8A8A8" stroke="#E83828"/><path d="M12 1L15 1L15 4Z M1 12L1 15L4 15Z" fill="#fff"/><circle cx="7.800" cy="8" r="6.300" fill="#0A0AD8"/><circle cx="9" cy="7" r="3.500" fill="#1818F8"/><path d="M4 4.500L6.500 3L8.500 3.500L7.500 5L6 5.500L6.500 7L8 8L7.500 10L6.500 12.500L5.500 10.500L5 8L3.500 6.500Z" fill="#8A8A10"/><path d="M11.500 5.500L13 6.500L13 9L12 10L11.500 8Z" fill="#8A8A10"/></svg><span style="left:30px;top:4px;line-height:14px">КОРМ ОПТИМА ЭКС…</span></div>
<div class="a tb" style="left:428px;width:158px;"><svg style="left:9px;top:3px" width="17" height="17" viewBox="0 0 17 17"><rect x="1" y="1" width="15" height="15" rx="2" fill="#E8F0F8"/><circle cx="8.500" cy="8.500" r="6" fill="none" stroke="#30A050" stroke-width="2.500"/><path d="M8.500 2.500A6 6 0 0 1 14.500 8.500" fill="none" stroke="#3070D0" stroke-width="2.500"/><circle cx="8.500" cy="8.500" r="2" fill="#fff"/></svg><span style="left:26px;top:4px;line-height:14px">Total Commander 7.0…</span></div>
<div class="a tb" style="left:588px;width:158px;"><svg style="left:9px;top:3px" width="17" height="17" viewBox="0 0 17 17"><rect x="3.500" y="1.500" width="12" height="14" fill="#fff" stroke="#6080C0"/><path d="M6 4H13M6 6H13M6 8H13M6 10H13M6 12H13" stroke="#9AB" stroke-width=".8"/><rect x="1" y="4" width="9" height="9" fill="#2850B0"/><path d="M2.500 6L4 11.500L5.500 7.500L7 11.500L8.500 6" stroke="#fff" stroke-width="1.200" fill="none"/></svg><span style="left:26.5px;top:4px;line-height:14px">выпускнСитько [Ре…</span></div>
<div id="tray" class="a"></div>
<div class="a" style="left:851px;top:745px;width:14px;height:16px;background:#3F66B8"><span style="left:1px;top:1px;color:#fff;font-size:10px;line-height:14px;letter-spacing:-0.3px">RU</span></div>
<div class="a" style="left:869px;top:745px;width:17px;height:17px;border-radius:50%;background:radial-gradient(circle at 40% 35%,#5AA8FF,#1A60D8 70%,#0A3CA0);border:1px solid #B8D8FF"><svg style="left:3px;top:3px" width="9" height="9"><path d="M6 1L2.500 4.500L6 8" stroke="#fff" stroke-width="2" fill="none"/></svg></div>
<svg class="a" style="left:888px;top:745px" width="17" height="17" viewBox="0 0 17 17"><circle cx="8.500" cy="8.500" r="8" fill="#000"/><path d="M8.500 1.500A7 7 0 1 1 2 11L5 9.500A4 4 0 1 0 8.500 4.500Z" fill="#FFE800"/><path d="M8 5H11V9H8Z" fill="#000"/></svg>
<svg class="a" style="left:906px;top:744px" width="18" height="18" viewBox="0 0 18 18"><rect x="6" y="1" width="9" height="8" fill="#6068A0" stroke="#303860"/><rect x="1" y="6" width="9" height="8" fill="#8890C0" stroke="#303860"/><rect x="2.500" y="7.500" width="6" height="5" fill="#C8D0F0"/><path d="M9 10L16 17M16 10L9 17" stroke="#E82020" stroke-width="2.200"/></svg>
<svg class="a" style="left:924px;top:744px" width="18" height="18" viewBox="0 0 18 18"><ellipse cx="8" cy="8" rx="6" ry="7" fill="#808088" stroke="#404048"/><ellipse cx="8" cy="8" rx="3.500" ry="4.500" fill="#C8C8D0"/><ellipse cx="8" cy="8" rx="1.500" ry="2" fill="#505058"/><path d="M12 15Q15 13 16 9" stroke="#80A0F0" stroke-width="1.200" fill="none"/></svg>
<svg class="a" style="left:942px;top:744px" width="18" height="18" viewBox="0 0 18 18"><path d="M2 1Q3 8 6 10L13 12L15 16L9 15L4 12Q1 8 2 1Z" fill="#F8F8F8" stroke="#000" stroke-width="1"/><rect x="11" y="13" width="5" height="3" fill="#C8C020" stroke="#404000" stroke-width=".6"/></svg>
<svg class="a" style="left:960px;top:744px" width="17" height="18" viewBox="0 0 17 18"><path d="M1 2H5V8L10 2H15L9 9L12 13H7L5 10V16H1Z" fill="#F01010"/><path d="M9 10L16 10L16 17Z" fill="#000"/><path d="M8 9L15 16" stroke="#000" stroke-width="2.200"/></svg>
<span class="a " style="left:984px;top:746px;color:#fff;font-size:11px;line-height:14px;letter-spacing:0.2px">13:40</span>
</body></html>
